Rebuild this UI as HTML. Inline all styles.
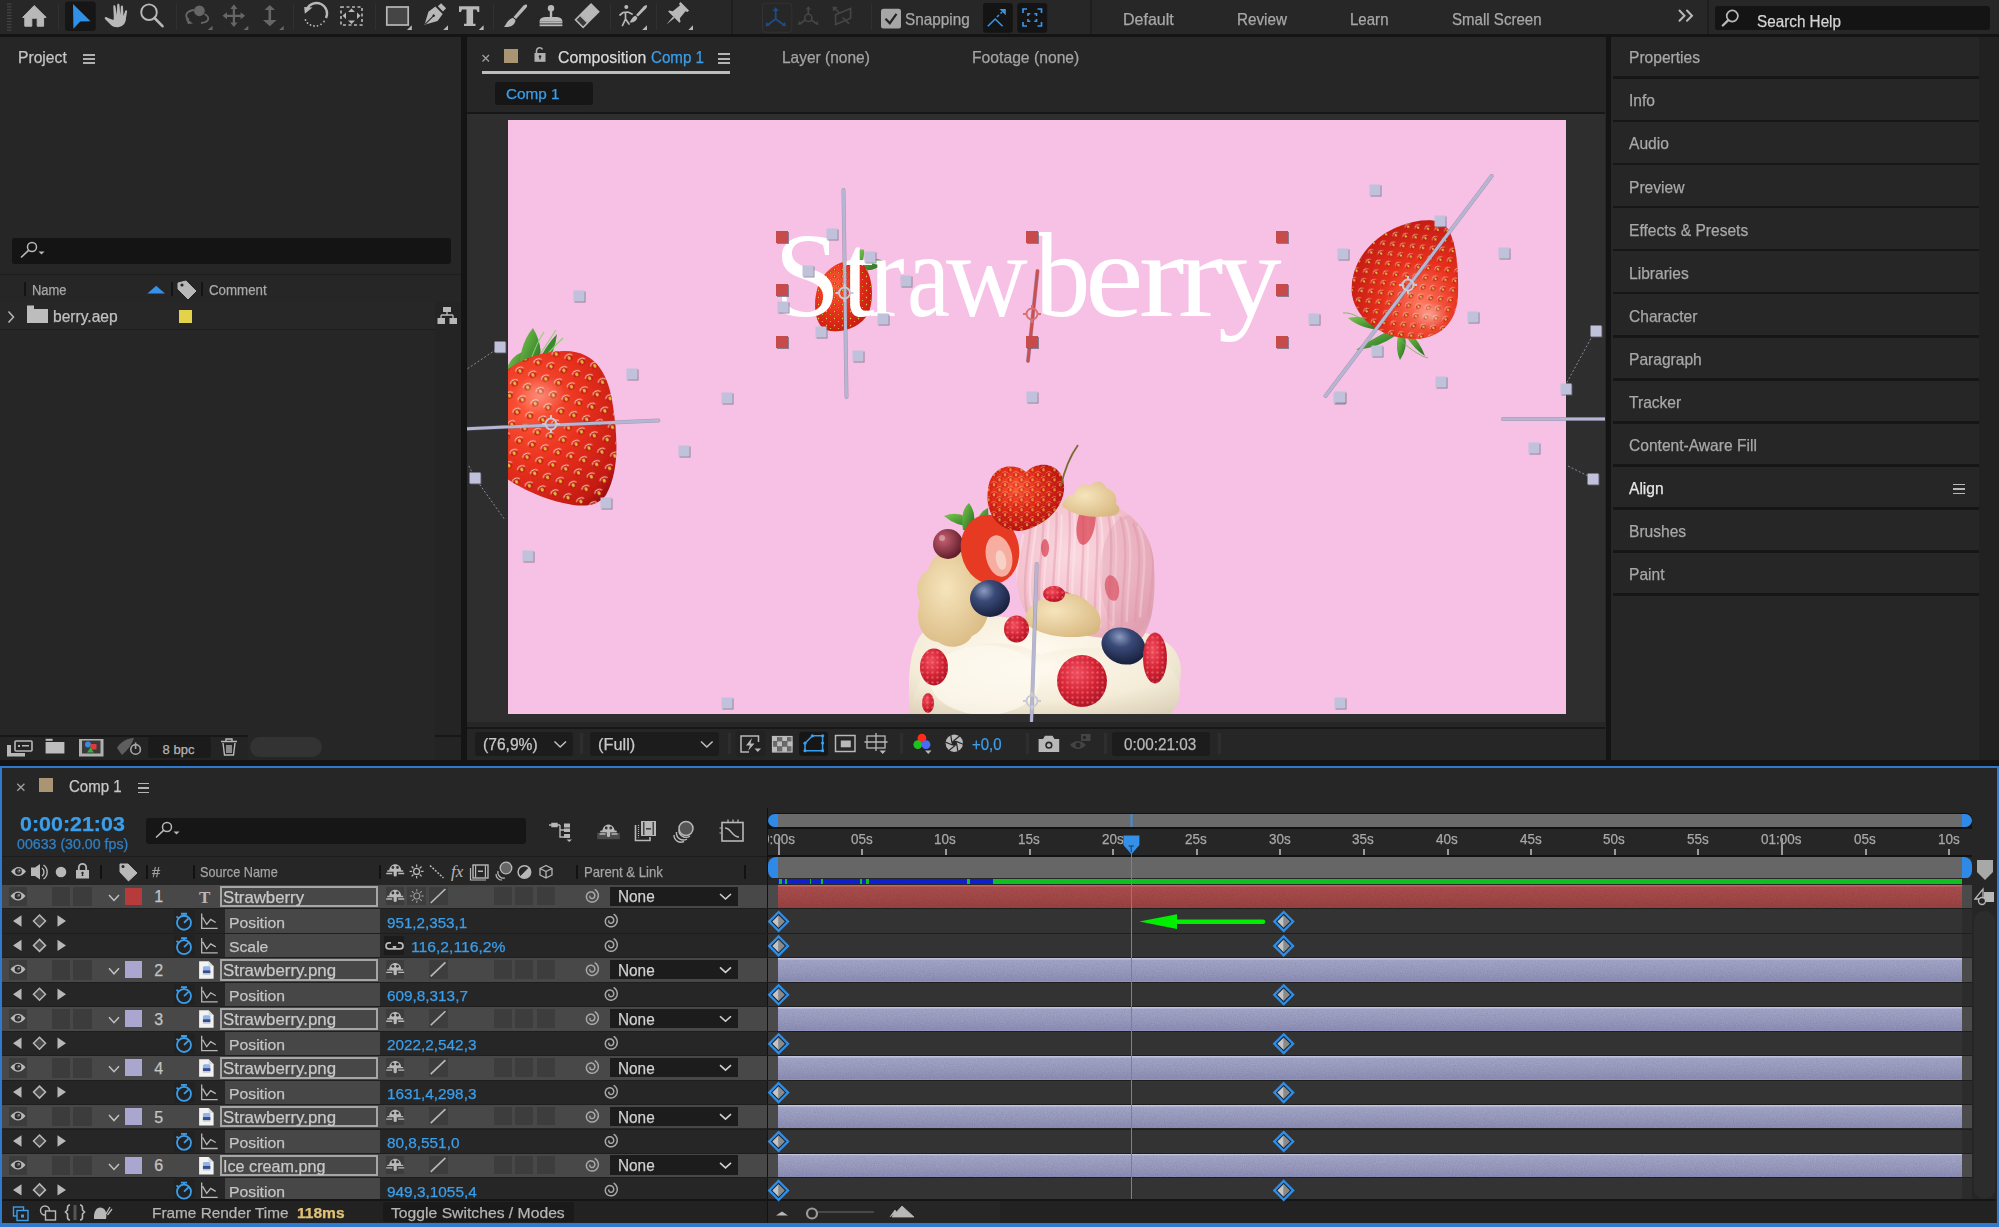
<!DOCTYPE html>
<html><head><meta charset="utf-8">
<style>
*{margin:0;padding:0;box-sizing:border-box}
html,body{width:1999px;height:1227px;overflow:hidden;background:#141414;font-family:"Liberation Sans",sans-serif;color:#b4b4b4;position:relative}
.a{position:absolute}
.t{position:absolute;white-space:nowrap;line-height:1;-webkit-text-stroke:0.25px currentColor}
svg{position:absolute;overflow:visible}
</style></head><body>
<div class="a" style="left:0px;top:0px;width:1999px;height:34px;background:#272727;"></div>
<div class="a" style="left:0px;top:37px;width:461px;height:723px;background:#262626;"></div>
<div class="a" style="left:467px;top:37px;width:1139px;height:723px;background:#262626;"></div>
<div class="a" style="left:467px;top:112px;width:1138px;height:2px;background:#171717;"></div>
<div class="a" style="left:467px;top:114px;width:1138px;height:608px;background:#2e2e2e;"></div>
<div class="a" style="left:508px;top:120px;width:1058px;height:594px;background:#f7c1e6;"></div>
<div class="a" style="left:467px;top:722px;width:1138px;height:5px;background:#262626;"></div>
<div class="a" style="left:467px;top:727px;width:1138px;height:2px;background:#171717;"></div>
<div class="a" style="left:1611px;top:37px;width:388px;height:723px;background:#262626;"></div>
<div class="a" style="left:1979px;top:37px;width:20px;height:723px;background:#212121;"></div>
<div class="a" style="left:0px;top:766px;width:1999px;height:461px;background:#2f7ad1;"></div>
<div class="a" style="left:2px;top:768px;width:1995px;height:455px;background:#262626;"></div>
<div class="t" style="left:1123.20px;top:10.53px;font-size:16.5px;color:#a8a8a8;font-weight:normal;font-family:'Liberation Sans', sans-serif;transform:scaleX(0.9718);transform-origin:0 0;">Default</div>
<div class="t" style="left:1236.70px;top:10.53px;font-size:16.5px;color:#a8a8a8;font-weight:normal;font-family:'Liberation Sans', sans-serif;transform:scaleX(0.9242);transform-origin:0 0;">Review</div>
<div class="t" style="left:1349.70px;top:10.53px;font-size:16.5px;color:#a8a8a8;font-weight:normal;font-family:'Liberation Sans', sans-serif;transform:scaleX(0.9124);transform-origin:0 0;">Learn</div>
<div class="t" style="left:1451.60px;top:10.53px;font-size:16.5px;color:#a8a8a8;font-weight:normal;font-family:'Liberation Sans', sans-serif;transform:scaleX(0.9132);transform-origin:0 0;">Small Screen</div>
<div class="t" style="left:905.00px;top:10.53px;font-size:16.5px;color:#a8a8a8;font-weight:normal;font-family:'Liberation Sans', sans-serif;transform:scaleX(0.9279);transform-origin:0 0;">Snapping</div>
<div class="a" style="left:57.5px;top:4px;width:1px;height:26px;background:#303030;"></div>
<div class="a" style="left:175.5px;top:4px;width:1px;height:26px;background:#303030;"></div>
<div class="a" style="left:292.5px;top:4px;width:1px;height:26px;background:#303030;"></div>
<div class="a" style="left:374.8px;top:4px;width:1px;height:26px;background:#303030;"></div>
<div class="a" style="left:492.5px;top:4px;width:1px;height:26px;background:#303030;"></div>
<div class="a" style="left:609.8px;top:4px;width:1px;height:26px;background:#303030;"></div>
<div class="a" style="left:656px;top:4px;width:1px;height:26px;background:#303030;"></div>
<div class="a" style="left:871px;top:4px;width:1px;height:26px;background:#303030;"></div>
<div class="a" style="left:731px;top:0px;width:2px;height:34px;background:#1f1f1f;"></div>
<div class="a" style="left:1090px;top:0px;width:2px;height:34px;background:#1f1f1f;"></div>
<div class="a" style="left:1707px;top:0px;width:2px;height:34px;background:#1f1f1f;"></div>
<div class="a" style="left:1715px;top:6px;width:275px;height:24px;background:#141414;border-radius:3px"></div>
<div class="t" style="left:1757.20px;top:13.03px;font-size:16.5px;color:#d4d4d4;font-weight:normal;font-family:'Liberation Sans', sans-serif;transform:scaleX(0.9252);transform-origin:0 0;">Search Help</div>
<div class="t" style="left:18.45px;top:49.28px;font-size:16.5px;color:#c4c4c4;font-weight:normal;font-family:'Liberation Sans', sans-serif;transform:scaleX(0.9493);transform-origin:0 0;">Project</div>
<div class="a" style="left:83px;top:53.5px;width:12px;height:2px;background:#b0b0b0;"></div>
<div class="a" style="left:83px;top:57.8px;width:12px;height:2px;background:#b0b0b0;"></div>
<div class="a" style="left:83px;top:62px;width:12px;height:2px;background:#b0b0b0;"></div>
<div class="a" style="left:12px;top:238px;width:439px;height:26px;background:#141414;border-radius:3px"></div>
<div class="a" style="left:0px;top:274px;width:461px;height:28px;background:#262626;border-top:1px solid #1e1e1e"></div>
<div class="a" style="left:24px;top:282px;width:2px;height:14px;background:#141414;"></div>
<div class="a" style="left:171px;top:282px;width:2px;height:14px;background:#141414;"></div>
<div class="a" style="left:201px;top:282px;width:2px;height:14px;background:#141414;"></div>
<div class="t" style="left:32.20px;top:282.95px;font-size:14px;color:#a8a8a8;font-weight:normal;font-family:'Liberation Sans', sans-serif;transform:scaleX(0.9239);transform-origin:0 0;">Name</div>
<div class="t" style="left:208.50px;top:282.95px;font-size:14px;color:#a8a8a8;font-weight:normal;font-family:'Liberation Sans', sans-serif;transform:scaleX(0.9493);transform-origin:0 0;">Comment</div>
<div class="a" style="left:0px;top:302px;width:435px;height:28px;background:#272727;border-bottom:1px solid #1e1e1e"></div>
<div class="a" style="left:435px;top:302px;width:26px;height:433px;background:#242424;"></div>
<div class="t" style="left:52.80px;top:309.26px;font-size:16px;color:#c0c0c0;font-weight:normal;font-family:'Liberation Sans', sans-serif;transform:scaleX(0.9744);transform-origin:0 0;">berry.aep</div>
<div class="a" style="left:179px;top:310px;width:13px;height:13px;background:#e3d24a;"></div>
<div class="a" style="left:0px;top:735px;width:461px;height:25px;background:#242424;border-top:2px solid #171717"></div>
<div class="a" style="left:248px;top:735px;width:187px;height:25px;background:#262626;"></div>
<div class="a" style="left:250px;top:737px;width:72px;height:20px;background:#333333;border-radius:10px"></div>
<div class="a" style="left:148px;top:737px;width:63px;height:21px;background:#1b1b1b;border-radius:3px"></div>
<div class="t" style="left:162.60px;top:742.60px;font-size:13px;color:#b4b4b4;font-weight:normal;font-family:'Liberation Sans', sans-serif;">8 bpc</div>
<div class="t" style="left:557.70px;top:49.33px;font-size:16.5px;color:#dadada;font-weight:normal;font-family:'Liberation Sans', sans-serif;transform:scaleX(0.9629);transform-origin:0 0;">Composition</div>
<div class="t" style="left:651.10px;top:49.33px;font-size:16.5px;color:#3b9eea;font-weight:normal;font-family:'Liberation Sans', sans-serif;transform:scaleX(0.9174);transform-origin:0 0;">Comp 1</div>
<div class="t" style="left:782.10px;top:49.13px;font-size:16.5px;color:#a4a4a4;font-weight:normal;font-family:'Liberation Sans', sans-serif;transform:scaleX(0.9386);transform-origin:0 0;">Layer (none)</div>
<div class="t" style="left:972.20px;top:49.13px;font-size:16.5px;color:#a4a4a4;font-weight:normal;font-family:'Liberation Sans', sans-serif;transform:scaleX(0.9511);transform-origin:0 0;">Footage (none)</div>
<div class="a" style="left:482px;top:71px;width:248px;height:3px;background:#bdbdbd;"></div>
<div class="a" style="left:504px;top:49px;width:14px;height:14px;background:#a99474;"></div>
<div class="a" style="left:718px;top:53px;width:12px;height:2px;background:#b4b4b4;"></div>
<div class="a" style="left:718px;top:57.5px;width:12px;height:2px;background:#b4b4b4;"></div>
<div class="a" style="left:718px;top:62px;width:12px;height:2px;background:#b4b4b4;"></div>
<div class="a" style="left:495px;top:82px;width:98px;height:23px;background:#161616;border-radius:3px"></div>
<div class="t" style="left:506.40px;top:86.10px;font-size:15px;color:#3b9eea;font-weight:normal;font-family:'Liberation Sans', sans-serif;transform:scaleX(1.0206);transform-origin:0 0;">Comp 1</div>
<div class="a" style="left:475px;top:732px;width:98px;height:24px;background:#1c1c1c;border-radius:3px"></div>
<div class="t" style="left:482.80px;top:737.33px;font-size:15.8px;color:#c8c8c8;font-weight:normal;font-family:'Liberation Sans', sans-serif;transform:scaleX(0.9888);transform-origin:0 0;">(76,9%)</div>
<div class="a" style="left:590px;top:732px;width:129px;height:24px;background:#1c1c1c;border-radius:3px"></div>
<div class="t" style="left:597.60px;top:737.33px;font-size:15.8px;color:#c8c8c8;font-weight:normal;font-family:'Liberation Sans', sans-serif;transform:scaleX(1.0339);transform-origin:0 0;">(Full)</div>
<div class="a" style="left:580px;top:733px;width:3px;height:21px;background:#2e2e2e;"></div>
<div class="a" style="left:727.5px;top:733px;width:3px;height:21px;background:#2e2e2e;"></div>
<div class="a" style="left:899.6px;top:733px;width:3px;height:21px;background:#2e2e2e;"></div>
<div class="a" style="left:1026px;top:733px;width:3px;height:21px;background:#2e2e2e;"></div>
<div class="a" style="left:1103.5px;top:733px;width:3px;height:21px;background:#2e2e2e;"></div>
<div class="a" style="left:1218px;top:733px;width:3px;height:21px;background:#2e2e2e;"></div>
<div class="a" style="left:1112px;top:732px;width:98px;height:24px;background:#1c1c1c;border-radius:3px"></div>
<div class="t" style="left:1123.70px;top:737.33px;font-size:15.8px;color:#b8b8b8;font-weight:normal;font-family:'Liberation Sans', sans-serif;transform:scaleX(0.9682);transform-origin:0 0;">0:00:21:03</div>
<div class="t" style="left:972.40px;top:737.13px;font-size:15.8px;color:#3b9eea;font-weight:normal;font-family:'Liberation Sans', sans-serif;transform:scaleX(0.9490);transform-origin:0 0;">+0,0</div>
<div class="t" style="left:1628.70px;top:49.28px;font-size:16.5px;color:#a8a8a8;font-weight:normal;font-family:'Liberation Sans', sans-serif;transform:scaleX(0.9442);transform-origin:0 0;">Properties</div>
<div class="a" style="left:1613px;top:76.45px;width:366px;height:2.6px;background:#161616;"></div>
<div class="t" style="left:1628.70px;top:92.36px;font-size:16.5px;color:#a8a8a8;font-weight:normal;font-family:'Liberation Sans', sans-serif;transform:scaleX(0.9442);transform-origin:0 0;">Info</div>
<div class="a" style="left:1613px;top:119.53px;width:366px;height:2.6px;background:#161616;"></div>
<div class="t" style="left:1628.70px;top:135.44px;font-size:16.5px;color:#a8a8a8;font-weight:normal;font-family:'Liberation Sans', sans-serif;transform:scaleX(0.9442);transform-origin:0 0;">Audio</div>
<div class="a" style="left:1613px;top:162.60999999999999px;width:366px;height:2.6px;background:#161616;"></div>
<div class="t" style="left:1628.70px;top:178.52px;font-size:16.5px;color:#a8a8a8;font-weight:normal;font-family:'Liberation Sans', sans-serif;transform:scaleX(0.9442);transform-origin:0 0;">Preview</div>
<div class="a" style="left:1613px;top:205.69px;width:366px;height:2.6px;background:#161616;"></div>
<div class="t" style="left:1628.70px;top:221.60px;font-size:16.5px;color:#a8a8a8;font-weight:normal;font-family:'Liberation Sans', sans-serif;transform:scaleX(0.9442);transform-origin:0 0;">Effects &amp; Presets</div>
<div class="a" style="left:1613px;top:248.76999999999998px;width:366px;height:2.6px;background:#161616;"></div>
<div class="t" style="left:1628.70px;top:264.68px;font-size:16.5px;color:#a8a8a8;font-weight:normal;font-family:'Liberation Sans', sans-serif;transform:scaleX(0.9442);transform-origin:0 0;">Libraries</div>
<div class="a" style="left:1613px;top:291.84999999999997px;width:366px;height:2.6px;background:#161616;"></div>
<div class="t" style="left:1628.70px;top:307.76px;font-size:16.5px;color:#a8a8a8;font-weight:normal;font-family:'Liberation Sans', sans-serif;transform:scaleX(0.9442);transform-origin:0 0;">Character</div>
<div class="a" style="left:1613px;top:334.93px;width:366px;height:2.6px;background:#161616;"></div>
<div class="t" style="left:1628.70px;top:350.84px;font-size:16.5px;color:#a8a8a8;font-weight:normal;font-family:'Liberation Sans', sans-serif;transform:scaleX(0.9442);transform-origin:0 0;">Paragraph</div>
<div class="a" style="left:1613px;top:378.01px;width:366px;height:2.6px;background:#161616;"></div>
<div class="t" style="left:1628.70px;top:393.92px;font-size:16.5px;color:#a8a8a8;font-weight:normal;font-family:'Liberation Sans', sans-serif;transform:scaleX(0.9442);transform-origin:0 0;">Tracker</div>
<div class="a" style="left:1613px;top:421.09px;width:366px;height:2.6px;background:#161616;"></div>
<div class="t" style="left:1628.70px;top:437.00px;font-size:16.5px;color:#a8a8a8;font-weight:normal;font-family:'Liberation Sans', sans-serif;transform:scaleX(0.9442);transform-origin:0 0;">Content-Aware Fill</div>
<div class="a" style="left:1613px;top:464.16999999999996px;width:366px;height:2.6px;background:#161616;"></div>
<div class="t" style="left:1628.70px;top:480.08px;font-size:16.5px;color:#e6e6e6;font-weight:normal;font-family:'Liberation Sans', sans-serif;transform:scaleX(0.9442);transform-origin:0 0;">Align</div>
<div class="a" style="left:1613px;top:507.24999999999994px;width:366px;height:2.6px;background:#161616;"></div>
<div class="t" style="left:1628.70px;top:523.16px;font-size:16.5px;color:#a8a8a8;font-weight:normal;font-family:'Liberation Sans', sans-serif;transform:scaleX(0.9442);transform-origin:0 0;">Brushes</div>
<div class="a" style="left:1613px;top:550.33px;width:366px;height:2.6px;background:#161616;"></div>
<div class="t" style="left:1628.70px;top:566.24px;font-size:16.5px;color:#a8a8a8;font-weight:normal;font-family:'Liberation Sans', sans-serif;transform:scaleX(0.9442);transform-origin:0 0;">Paint</div>
<div class="a" style="left:1613px;top:593.4100000000001px;width:366px;height:2.6px;background:#161616;"></div>
<div class="a" style="left:1953px;top:483.8px;width:12px;height:1.6px;background:#b8b8b8;"></div>
<div class="a" style="left:1953px;top:488.3px;width:12px;height:1.6px;background:#b8b8b8;"></div>
<div class="a" style="left:1953px;top:492.8px;width:12px;height:1.6px;background:#b8b8b8;"></div>
<svg style="left:0;top:0" width="1999" height="1227" viewBox="0 0 1999 1227">
<defs>
 <radialGradient id="sbg" cx="0.38" cy="0.35" r="0.75">
   <stop offset="0" stop-color="#ff5a3a"/>
   <stop offset="0.45" stop-color="#e22a18"/>
   <stop offset="0.85" stop-color="#b81410"/>
   <stop offset="1" stop-color="#8e0c0c"/>
 </radialGradient>
 <radialGradient id="shl" cx="0.5" cy="0.5" r="0.5">
   <stop offset="0" stop-color="#ffffff" stop-opacity="0.55"/>
   <stop offset="1" stop-color="#ffffff" stop-opacity="0"/>
 </radialGradient>
 <pattern id="seeds" width="11" height="10" patternUnits="userSpaceOnUse">
   <path d="M 1.2,3.2 A 3.2,3 0 0 1 6.8,3.2" stroke="#ffd8d0" stroke-width="0.9" fill="none" opacity="0.7"/>
   <ellipse cx="4" cy="5" rx="3" ry="2.6" fill="#a80c0c" opacity="0.6"/>
   <ellipse cx="4" cy="4.8" rx="1.3" ry="1.7" fill="#e8c448"/>
   <path d="M 6.7,8.2 A 3.2,3 0 0 1 12.3,8.2" stroke="#ffd8d0" stroke-width="0.9" fill="none" opacity="0.7"/>
   <ellipse cx="9.5" cy="10" rx="3" ry="2.6" fill="#a80c0c" opacity="0.6"/>
   <ellipse cx="9.5" cy="9.8" rx="1.3" ry="1.7" fill="#e8c448"/>
   <ellipse cx="-1.5" cy="10" rx="3" ry="2.6" fill="#a80c0c" opacity="0.6"/>
   <ellipse cx="-1.5" cy="9.8" rx="1.3" ry="1.7" fill="#e8c448"/>
   <ellipse cx="9.5" cy="0" rx="3" ry="2.6" fill="#a80c0c" opacity="0.6"/>
   <ellipse cx="9.5" cy="-0.2" rx="1.3" ry="1.7" fill="#e8c448"/>
 </pattern>
 <radialGradient id="sbg2" cx="0.35" cy="0.35" r="0.8">
   <stop offset="0" stop-color="#ff5a3c"/><stop offset="0.5" stop-color="#e8301c"/><stop offset="0.9" stop-color="#c41a12"/><stop offset="1" stop-color="#a01010"/>
 </radialGradient>
 <radialGradient id="sbg3" cx="0.65" cy="0.7" r="0.8">
   <stop offset="0" stop-color="#ff7a60"/><stop offset="0.45" stop-color="#e8301c"/><stop offset="0.9" stop-color="#c41a12"/><stop offset="1" stop-color="#a01010"/>
 </radialGradient>
 <pattern id="seedsBig" width="20" height="18" patternUnits="userSpaceOnUse" patternTransform="rotate(-25)">
   <g id="sd"><path d="M 0.5,5.8 A 4.2,3.6 0 0 1 8.5,5.8" stroke="#ffe0d8" stroke-width="1.3" fill="none" opacity="0.75"/><ellipse cx="4.5" cy="7" rx="3.4" ry="2.9" fill="#b81410" opacity="0.7"/><ellipse cx="4.5" cy="7" rx="1.5" ry="2" fill="#dcc040"/></g>
   <use href="#sd" x="10" y="9"/><use href="#sd" x="-10" y="9"/><use href="#sd" x="10" y="-9"/><use href="#sd" x="-10" y="-9"/>
 </pattern>
 <pattern id="seedsMd" width="15" height="13" patternUnits="userSpaceOnUse" patternTransform="rotate(-35)">
   <g id="sd2"><path d="M 0.5,4.3 A 3.2,2.7 0 0 1 6.5,4.3" stroke="#ffe0d8" stroke-width="1" fill="none" opacity="0.75"/><ellipse cx="3.5" cy="5.2" rx="2.6" ry="2.2" fill="#b81410" opacity="0.7"/><ellipse cx="3.5" cy="5.2" rx="1.1" ry="1.5" fill="#dcc040"/></g>
   <use href="#sd2" x="7.5" y="6.5"/><use href="#sd2" x="-7.5" y="6.5"/><use href="#sd2" x="7.5" y="-6.5"/><use href="#sd2" x="-7.5" y="-6.5"/>
 </pattern>
 <pattern id="seedsSm" width="8" height="7" patternUnits="userSpaceOnUse">
   <g id="sd3"><ellipse cx="2.5" cy="3.5" rx="1.8" ry="1.5" fill="#b81410" opacity="0.7"/><ellipse cx="2.5" cy="3.5" rx="0.8" ry="1.1" fill="#dcc040"/></g>
   <use href="#sd3" x="4" y="3.5"/><use href="#sd3" x="-4" y="3.5"/>
 </pattern>
 <pattern id="rdots" width="5" height="5" patternUnits="userSpaceOnUse">
   <circle cx="2.5" cy="2.5" r="1.2" fill="#ff8090"/>
 </pattern>
 <pattern id="seeds2" width="8" height="8" patternUnits="userSpaceOnUse">
   <ellipse cx="2.5" cy="2.5" rx="1" ry="1.2" fill="#e6c040"/>
   <ellipse cx="6.5" cy="6.5" rx="1" ry="1.2" fill="#e6c040"/>
 </pattern>
 <linearGradient id="leaf" x1="0" y1="0" x2="1" y2="1">
   <stop offset="0" stop-color="#7cc850"/><stop offset="1" stop-color="#1f6a1c"/>
 </linearGradient>
 <radialGradient id="blue" cx="0.35" cy="0.3" r="0.7">
   <stop offset="0" stop-color="#8a9ac0"/><stop offset="0.4" stop-color="#3a4a78"/><stop offset="1" stop-color="#1a2240"/>
 </radialGradient>
 <radialGradient id="rasp" cx="0.4" cy="0.35" r="0.7">
   <stop offset="0" stop-color="#f05060"/><stop offset="0.55" stop-color="#d42434"/><stop offset="1" stop-color="#a81424"/>
 </radialGradient>
 <radialGradient id="pinkscoop" cx="0.4" cy="0.4" r="0.7">
   <stop offset="0" stop-color="#fbd8e0"/><stop offset="0.65" stop-color="#f2c0cc"/><stop offset="1" stop-color="#e4a6b6"/>
 </radialGradient>
 <radialGradient id="cream" cx="0.45" cy="0.35" r="0.8">
   <stop offset="0" stop-color="#fffaf0"/><stop offset="0.6" stop-color="#f4ecd8"/><stop offset="1" stop-color="#dcd0b8"/>
 </radialGradient>
 <radialGradient id="crumb" cx="0.4" cy="0.4" r="0.7">
   <stop offset="0" stop-color="#f6e4bc"/><stop offset="1" stop-color="#d8b880"/>
 </radialGradient>
 <radialGradient id="grape" cx="0.35" cy="0.35" r="0.7">
   <stop offset="0" stop-color="#c86070"/><stop offset="1" stop-color="#5a1a28"/>
 </radialGradient>
 <clipPath id="scoopclip"><path d="M 1016,567 C 1014,530 1040,501 1080,499 C 1125,499 1154,530 1154,567 C 1156,600 1152,625 1142,638 C 1100,642 1050,632 1025,612 C 1018,597 1016,582 1016,567 Z"/></clipPath>
 <clipPath id="compclip"><rect x="508" y="120" width="1058" height="594"/></clipPath>
 <clipPath id="viewclip"><rect x="467" y="114" width="1138" height="608"/></clipPath>
 <filter id="hs" x="-20%" y="-20%" width="150%" height="150%"><feDropShadow dx="1" dy="1" stdDeviation="0.4" flood-color="#606070" flood-opacity="0.7"/></filter>
</defs><g clip-path="url(#compclip)"><path d="M 508,392 Q 500,362 522,352 Q 528,375 516,392 Z" fill="url(#leaf)"/><path d="M 520,374 Q 518,346 533,328 Q 546,350 537,372 Z" fill="url(#leaf)"/><path d="M 536,366 Q 546,345 557,334 Q 555,352 545,366 Z" fill="#3a8a30"/><path d="M 534,364 Q 548,342 556,330 M 538,366 Q 552,348 563,338 M 530,362 Q 537,342 544,332" stroke="#8ad070" stroke-width="1.1" fill="none"/><path d="M 485,400 C 495,370 530,351 565,351 C 597,351 609,376 613,406 C 618,440 619,472 606,495 C 598,506 584,508 563,503 C 533,496 503,480 485,460 Z" fill="url(#sbg2)"/><path d="M 485,400 C 495,370 530,351 565,351 C 597,351 609,376 613,406 C 618,440 619,472 606,495 C 598,506 584,508 563,503 C 533,496 503,480 485,460 Z" fill="url(#seedsBig)"/><ellipse cx="540" cy="395" rx="26" ry="20" fill="url(#shl)" opacity="0.6"/><path d="M 853,262 Q 858,246 864,250 Q 865,258 860,266 Z M 860,266 Q 878,255 884,262 Q 875,272 864,270 Z" fill="url(#leaf)"/><path d="M 860,262 C 872,270 875,295 869,312 C 861,328 841,334 826,330 C 815,325 813,305 817,290 C 821,272 840,256 860,262 Z" fill="url(#sbg2)"/><path d="M 860,262 C 872,270 875,295 869,312 C 861,328 841,334 826,330 C 815,325 813,305 817,290 C 821,272 840,256 860,262 Z" fill="url(#seedsSm)"/><path d="M 1385,322 Q 1360,315 1348,318 Q 1362,330 1385,330 Z" fill="url(#leaf)"/><path d="M 1390,330 Q 1370,340 1356,350 Q 1378,348 1395,336 Z" fill="url(#leaf)"/><path d="M 1398,335 Q 1395,350 1400,360 Q 1408,348 1405,336 Z" fill="url(#leaf)"/><path d="M 1405,335 Q 1415,350 1425,356 Q 1420,342 1410,333 Z" fill="url(#leaf)"/><path d="M 1360,318 Q 1350,312 1343,313 M 1400,340 Q 1418,356 1428,358" stroke="#6ab050" stroke-width="0.8" fill="none"/><path d="M 1440,222 C 1455,228 1459,262 1458,295 C 1457,322 1441,338 1415,339 C 1385,339 1357,322 1352,295 C 1349,265 1369,238 1400,226 C 1415,220 1430,219 1440,222 Z" fill="url(#sbg3)"/><path d="M 1440,222 C 1455,228 1459,262 1458,295 C 1457,322 1441,338 1415,339 C 1385,339 1357,322 1352,295 C 1349,265 1369,238 1400,226 C 1415,220 1430,219 1440,222 Z" fill="url(#seedsMd)"/><ellipse cx="1430" cy="315" rx="18" ry="14" fill="url(#shl)" opacity="0.7"/><path d="M 909,714 L 909,682 C 910,655 915,640 925,630 C 950,615 990,612 1020,620 C 1060,628 1100,630 1140,632 C 1165,636 1181,650 1181,670 C 1181,690 1172,705 1168,714 Z" fill="url(#cream)"/><path d="M 1016,567 C 1014,530 1040,501 1080,499 C 1125,499 1154,530 1154,567 C 1156,600 1152,625 1142,638 C 1100,642 1050,632 1025,612 C 1018,597 1016,582 1016,567 Z" fill="url(#pinkscoop)"/><g clip-path="url(#scoopclip)"><path d="M 1018.2,531.1 C 1014.3,556.4 1005.3,586.0 1015.6,615.5" stroke="#e096a8" stroke-width="2.4" fill="none" opacity="0.45"/><path d="M 1023.2,534.1 C 1019.3,556.4 1010.3,586.0 1020.6,611.5" stroke="#fde8ee" stroke-width="2.4" fill="none" opacity="0.5"/><path d="M 1030.9,522.8 C 1028.8,552.4 1019.8,586.9 1028.9,621.4" stroke="#e096a8" stroke-width="2.4" fill="none" opacity="0.45"/><path d="M 1035.9,525.8 C 1033.8,552.4 1024.8,586.9 1033.9,617.4" stroke="#fde8ee" stroke-width="2.4" fill="none" opacity="0.5"/><path d="M 1043.7,516.3 C 1043.4,549.2 1034.4,587.6 1042.2,626.0" stroke="#e096a8" stroke-width="2.4" fill="none" opacity="0.45"/><path d="M 1048.7,519.3 C 1048.4,549.2 1039.4,587.6 1047.2,622.0" stroke="#fde8ee" stroke-width="2.4" fill="none" opacity="0.5"/><path d="M 1056.5,511.7 C 1057.9,547.0 1048.9,588.2 1055.5,629.4" stroke="#e096a8" stroke-width="2.4" fill="none" opacity="0.45"/><path d="M 1061.5,514.7 C 1062.9,547.0 1053.9,588.2 1060.5,625.4" stroke="#fde8ee" stroke-width="2.4" fill="none" opacity="0.5"/><path d="M 1069.2,508.9 C 1072.5,545.6 1063.5,588.5 1068.7,631.3" stroke="#e096a8" stroke-width="2.4" fill="none" opacity="0.45"/><path d="M 1074.2,511.9 C 1077.5,545.6 1068.5,588.5 1073.7,627.3" stroke="#fde8ee" stroke-width="2.4" fill="none" opacity="0.5"/><path d="M 1082.0,508.0 C 1087.0,545.2 1078.0,588.6 1082.0,632.0" stroke="#e096a8" stroke-width="2.4" fill="none" opacity="0.45"/><path d="M 1087.0,511.0 C 1092.0,545.2 1083.0,588.6 1087.0,628.0" stroke="#fde8ee" stroke-width="2.4" fill="none" opacity="0.5"/><path d="M 1094.8,508.9 C 1101.5,545.6 1092.5,588.5 1095.3,631.3" stroke="#e096a8" stroke-width="2.4" fill="none" opacity="0.45"/><path d="M 1099.8,511.9 C 1106.5,545.6 1097.5,588.5 1100.3,627.3" stroke="#fde8ee" stroke-width="2.4" fill="none" opacity="0.5"/><path d="M 1107.5,511.7 C 1116.1,547.0 1107.1,588.2 1108.5,629.4" stroke="#e096a8" stroke-width="2.4" fill="none" opacity="0.45"/><path d="M 1112.5,514.7 C 1121.1,547.0 1112.1,588.2 1113.5,625.4" stroke="#fde8ee" stroke-width="2.4" fill="none" opacity="0.5"/><path d="M 1120.3,516.3 C 1130.6,549.2 1121.6,587.6 1121.8,626.0" stroke="#e096a8" stroke-width="2.4" fill="none" opacity="0.45"/><path d="M 1125.3,519.3 C 1135.6,549.2 1126.6,587.6 1126.8,622.0" stroke="#fde8ee" stroke-width="2.4" fill="none" opacity="0.5"/><path d="M 1133.1,522.8 C 1145.2,552.4 1136.2,586.9 1135.1,621.4" stroke="#e096a8" stroke-width="2.4" fill="none" opacity="0.45"/><path d="M 1138.1,525.8 C 1150.2,552.4 1141.2,586.9 1140.1,617.4" stroke="#fde8ee" stroke-width="2.4" fill="none" opacity="0.5"/><path d="M 1145.8,531.1 C 1159.7,556.4 1150.7,586.0 1148.4,615.5" stroke="#e096a8" stroke-width="2.4" fill="none" opacity="0.45"/><path d="M 1150.8,534.1 C 1164.7,556.4 1155.7,586.0 1153.4,611.5" stroke="#fde8ee" stroke-width="2.4" fill="none" opacity="0.5"/><ellipse cx="1086" cy="524" rx="9" ry="21" fill="#d83c4c" opacity="0.7" transform="rotate(10 1086 524)"/><ellipse cx="1112" cy="588" rx="7" ry="13" fill="#d83c4c" opacity="0.7" transform="rotate(-10 1112 588)"/><ellipse cx="1062" cy="600" rx="12" ry="9" fill="#d83c4c" opacity="0.7" transform="rotate(0 1062 600)"/><ellipse cx="1045" cy="548" rx="4" ry="9" fill="#d83c4c" opacity="0.7" transform="rotate(0 1045 548)"/><ellipse cx="1130" cy="575" rx="30" ry="60" fill="#d890a4" opacity="0.25"/></g><path d="M 1062,506 C 1064,498 1070,494 1074,495 C 1076,487 1084,482 1090,486 C 1094,480 1104,480 1106,488 C 1114,490 1118,498 1116,504 C 1122,508 1120,515 1112,516 C 1095,518 1075,517 1062,506 Z" fill="url(#crumb)"/><path d="M 920,602 C 914,590 918,575 928,570 C 930,558 942,550 954,552 C 966,546 982,552 984,566 C 992,574 990,590 986,598 C 992,612 986,630 972,636 C 966,648 948,650 938,642 C 922,640 914,622 920,602 Z" fill="url(#crumb)"/><path d="M 1024,622 C 1026,606 1040,596 1052,600 C 1062,590 1080,592 1090,604 C 1102,612 1104,626 1096,634 C 1075,640 1040,638 1024,622 Z" fill="url(#crumb)"/><path d="M 912,714 C 912,690 922,668 950,652 C 985,640 1020,640 1040,655 C 1060,648 1100,645 1130,650 C 1160,655 1180,670 1180,690 C 1180,702 1174,710 1170,714 Z" fill="url(#cream)"/><ellipse cx="985" cy="680" rx="55" ry="35" fill="#fdf9ef" opacity="0.7"/><path d="M 944,516 Q 962,508 978,527 Q 958,528 944,516 Z" fill="url(#leaf)"/><path d="M 963,530 Q 960,510 969,503 Q 978,515 972,530 Z" fill="url(#leaf)"/><path d="M 975,528 Q 978,512 988,508 Q 990,520 982,530 Z" fill="url(#leaf)"/><ellipse cx="948" cy="544" rx="15" ry="15" fill="url(#grape)"/><circle cx="942" cy="538" r="3" fill="#fff" opacity="0.35"/><ellipse cx="990" cy="549.5" rx="29" ry="35" fill="#e63a22" transform="rotate(-12 990 549.5)"/><ellipse cx="999" cy="556" rx="13" ry="21" fill="#f7aea0" transform="rotate(-12 999 556)"/><ellipse cx="1001" cy="560" rx="5" ry="10" fill="#f7d0c6" transform="rotate(-12 1001 560)"/><path d="M 1026,472 C 1040,458 1066,464 1064,490 C 1062,512 1040,528 1020,531 C 995,531 985,510 988,490 C 990,466 1012,461 1026,472 Z" fill="url(#sbg)"/><path d="M 1026,472 C 1040,458 1066,464 1064,490 C 1062,512 1040,528 1020,531 C 995,531 985,510 988,490 C 990,466 1012,461 1026,472 Z" fill="url(#seeds)" opacity="0.6"/><path d="M 1061,486 Q 1066,462 1078,445" stroke="#7a6a30" stroke-width="1.8" fill="none"/><ellipse cx="990" cy="598.5" rx="20" ry="18.5" fill="url(#blue)"/><ellipse cx="1123.5" cy="646" rx="22.5" ry="18" fill="url(#blue)" transform="rotate(20 1123.5 646)"/><ellipse cx="934" cy="667" rx="14" ry="18.5" fill="url(#rasp)"/><ellipse cx="934" cy="667" rx="14" ry="18.5" fill="url(#rdots)" opacity="0.5"/><ellipse cx="928" cy="703" rx="6" ry="10" fill="url(#rasp)"/><ellipse cx="928" cy="703" rx="6" ry="10" fill="url(#rdots)" opacity="0.5"/><ellipse cx="1082" cy="681" rx="25" ry="26" fill="url(#rasp)"/><ellipse cx="1082" cy="681" rx="25" ry="26" fill="url(#rdots)" opacity="0.5"/><ellipse cx="1155" cy="658" rx="12" ry="25.5" fill="url(#rasp)"/><ellipse cx="1155" cy="658" rx="12" ry="25.5" fill="url(#rdots)" opacity="0.5"/><ellipse cx="1016.5" cy="629" rx="12.5" ry="13.5" fill="url(#rasp)"/><ellipse cx="1016.5" cy="629" rx="12.5" ry="13.5" fill="url(#rdots)" opacity="0.5"/><ellipse cx="1054" cy="594" rx="11" ry="8" fill="url(#rasp)"/><ellipse cx="1054" cy="594" rx="11" ry="8" fill="url(#rdots)" opacity="0.5"/></g></svg>
<div class="t" style="left:773.69px;top:214.66px;font-size:121px;color:#fff;font-family:'Liberation Serif',serif;-webkit-text-stroke:0;transform:scaleX(0.9882);transform-origin:0 0">S</div>
<div class="t" style="left:841.53px;top:214.66px;font-size:121px;color:#fff;font-family:'Liberation Serif',serif;-webkit-text-stroke:0;transform:scaleX(0.9677);transform-origin:0 0">t</div>
<div class="t" style="left:868.83px;top:214.66px;font-size:121px;color:#fff;font-family:'Liberation Serif',serif;-webkit-text-stroke:0;transform:scaleX(0.8861);transform-origin:0 0">r</div>
<div class="t" style="left:906.80px;top:214.66px;font-size:121px;color:#fff;font-family:'Liberation Serif',serif;-webkit-text-stroke:0;transform:scaleX(0.8000);transform-origin:0 0">a</div>
<div class="t" style="left:945.60px;top:214.66px;font-size:121px;color:#fff;font-family:'Liberation Serif',serif;-webkit-text-stroke:0;transform:scaleX(0.9349);transform-origin:0 0">w</div>
<div class="t" style="left:1034.50px;top:214.66px;font-size:121px;color:#fff;font-family:'Liberation Serif',serif;-webkit-text-stroke:0;transform:scaleX(0.9145);transform-origin:0 0">b</div>
<div class="t" style="left:1084.55px;top:214.66px;font-size:121px;color:#fff;font-family:'Liberation Serif',serif;-webkit-text-stroke:0;transform:scaleX(1.0909);transform-origin:0 0">e</div>
<div class="t" style="left:1138.74px;top:214.66px;font-size:121px;color:#fff;font-family:'Liberation Serif',serif;-webkit-text-stroke:0;transform:scaleX(1.1278);transform-origin:0 0">r</div>
<div class="t" style="left:1177.74px;top:214.66px;font-size:121px;color:#fff;font-family:'Liberation Serif',serif;-webkit-text-stroke:0;transform:scaleX(1.1278);transform-origin:0 0">r</div>
<div class="t" style="left:1217.95px;top:214.66px;font-size:121px;color:#fff;font-family:'Liberation Serif',serif;-webkit-text-stroke:0;transform:scaleX(1.0517);transform-origin:0 0">y</div>
<svg style="left:0;top:0" width="1999" height="1227" viewBox="0 0 1999 1227"><g clip-path="url(#viewclip)"><line x1="843.5" y1="190" x2="846.5" y2="397" stroke="#6a6a80" stroke-width="4" stroke-linecap="round" opacity="0.5"/><line x1="843.5" y1="190" x2="846.5" y2="397" stroke="#b4b6d4" stroke-width="3" stroke-linecap="round"/><line x1="1325.5" y1="396" x2="1491.7" y2="176" stroke="#6a6a80" stroke-width="4" stroke-linecap="round" opacity="0.5"/><line x1="1325.5" y1="396" x2="1491.7" y2="176" stroke="#b4b6d4" stroke-width="3" stroke-linecap="round"/><line x1="467.6" y1="428.7" x2="658.4" y2="420.4" stroke="#6a6a80" stroke-width="4" stroke-linecap="round" opacity="0.5"/><line x1="467.6" y1="428.7" x2="658.4" y2="420.4" stroke="#b4b6d4" stroke-width="3" stroke-linecap="round"/><line x1="1503" y1="419" x2="1610" y2="419" stroke="#6a6a80" stroke-width="4" stroke-linecap="round" opacity="0.5"/><line x1="1503" y1="419" x2="1610" y2="419" stroke="#b4b6d4" stroke-width="3" stroke-linecap="round"/><line x1="1036.7" y1="564" x2="1031.5" y2="721" stroke="#6a6a80" stroke-width="4" stroke-linecap="round" opacity="0.5"/><line x1="1036.7" y1="564" x2="1031.5" y2="721" stroke="#b4b6d4" stroke-width="3" stroke-linecap="round"/><line x1="1037.5" y1="271" x2="1028" y2="361" stroke="#6a6a80" stroke-width="4" stroke-linecap="round" opacity="0.5"/><line x1="1037.5" y1="271" x2="1028" y2="361" stroke="#c85050" stroke-width="3" stroke-linecap="round"/><line x1="467.6" y1="368.6" x2="497" y2="349" stroke="#8a8a9a" stroke-width="1" stroke-dasharray="2 2"/><line x1="468.8" y1="465.9" x2="475" y2="478" stroke="#8a8a9a" stroke-width="1" stroke-dasharray="2 2"/><line x1="475" y1="478" x2="505" y2="520" stroke="#8a8a9a" stroke-width="1" stroke-dasharray="2 2"/><line x1="1565" y1="386" x2="1595" y2="331" stroke="#8a8a9a" stroke-width="1" stroke-dasharray="2 2"/><line x1="1568" y1="466" x2="1592" y2="478" stroke="#8a8a9a" stroke-width="1" stroke-dasharray="2 2"/><circle cx="844.5" cy="293" r="5.5" fill="none" stroke="#c8cad8" stroke-width="2"/><path d="M 835.5,293 H 839.5 M 849.5,293 H 853.5 M 844.5,284 V 288 M 844.5,298 V 302" stroke="#c8cad8" stroke-width="2"/><circle cx="1408" cy="285" r="5.5" fill="none" stroke="#c8cad8" stroke-width="2"/><path d="M 1399,285 H 1403 M 1413,285 H 1417 M 1408,276 V 280 M 1408,290 V 294" stroke="#c8cad8" stroke-width="2"/><circle cx="551" cy="424" r="5.5" fill="none" stroke="#c8cad8" stroke-width="2"/><path d="M 542,424 H 546 M 556,424 H 560 M 551,415 V 419 M 551,429 V 433" stroke="#c8cad8" stroke-width="2"/><circle cx="1032" cy="701" r="5.5" fill="none" stroke="#c8cad8" stroke-width="2"/><path d="M 1023,701 H 1027 M 1037,701 H 1041 M 1032,692 V 696 M 1032,706 V 710" stroke="#c8cad8" stroke-width="2"/><circle cx="1032" cy="314" r="5.5" fill="none" stroke="#d87070" stroke-width="2"/><path d="M 1023,314 H 1027 M 1037,314 H 1041 M 1032,305 V 309 M 1032,319 V 323" stroke="#d87070" stroke-width="2"/><rect x="826.5" y="228.5" width="11" height="11" fill="#c0c2dc" filter="url(#hs)"/><rect x="864.5" y="251.5" width="11" height="11" fill="#c0c2dc" filter="url(#hs)"/><rect x="802.5" y="265.5" width="11" height="11" fill="#c0c2dc" filter="url(#hs)"/><rect x="900.5" y="275.5" width="11" height="11" fill="#c0c2dc" filter="url(#hs)"/><rect x="777.5" y="301.5" width="11" height="11" fill="#c0c2dc" filter="url(#hs)"/><rect x="877.5" y="313.5" width="11" height="11" fill="#c0c2dc" filter="url(#hs)"/><rect x="815.5" y="326.5" width="11" height="11" fill="#c0c2dc" filter="url(#hs)"/><rect x="852.5" y="350.5" width="11" height="11" fill="#c0c2dc" filter="url(#hs)"/><rect x="573.5" y="290.5" width="11" height="11" fill="#c0c2dc" filter="url(#hs)"/><rect x="494.5" y="341.5" width="11" height="11" fill="#c0c2dc" filter="url(#hs)"/><rect x="626.5" y="368.5" width="11" height="11" fill="#c0c2dc" filter="url(#hs)"/><rect x="721.5" y="392.5" width="11" height="11" fill="#c0c2dc" filter="url(#hs)"/><rect x="678.5" y="445.5" width="11" height="11" fill="#c0c2dc" filter="url(#hs)"/><rect x="469.5" y="472.5" width="11" height="11" fill="#c0c2dc" filter="url(#hs)"/><rect x="600.5" y="497.5" width="11" height="11" fill="#c0c2dc" filter="url(#hs)"/><rect x="522.5" y="550.5" width="11" height="11" fill="#c0c2dc" filter="url(#hs)"/><rect x="1369.5" y="184.5" width="11" height="11" fill="#c0c2dc" filter="url(#hs)"/><rect x="1434.5" y="215.5" width="11" height="11" fill="#c0c2dc" filter="url(#hs)"/><rect x="1337.5" y="248.5" width="11" height="11" fill="#c0c2dc" filter="url(#hs)"/><rect x="1498.5" y="247.5" width="11" height="11" fill="#c0c2dc" filter="url(#hs)"/><rect x="1308.5" y="313.5" width="11" height="11" fill="#c0c2dc" filter="url(#hs)"/><rect x="1467.5" y="311.5" width="11" height="11" fill="#c0c2dc" filter="url(#hs)"/><rect x="1371.5" y="345.5" width="11" height="11" fill="#c0c2dc" filter="url(#hs)"/><rect x="1435.5" y="376.5" width="11" height="11" fill="#c0c2dc" filter="url(#hs)"/><rect x="1333.5" y="392.5" width="11" height="11" fill="#c0c2dc" filter="url(#hs)"/><rect x="1590.5" y="325.5" width="11" height="11" fill="#c0c2dc" filter="url(#hs)"/><rect x="1560.5" y="383.5" width="11" height="11" fill="#c0c2dc" filter="url(#hs)"/><rect x="1528.5" y="442.5" width="11" height="11" fill="#c0c2dc" filter="url(#hs)"/><rect x="1587.5" y="473.5" width="11" height="11" fill="#c0c2dc" filter="url(#hs)"/><rect x="1026.5" y="391.5" width="11" height="11" fill="#c0c2dc" filter="url(#hs)"/><rect x="1334.5" y="391.5" width="11" height="11" fill="#c0c2dc" filter="url(#hs)"/><rect x="721.5" y="697.5" width="11" height="11" fill="#c0c2dc" filter="url(#hs)"/><rect x="1334.5" y="697.5" width="11" height="11" fill="#c0c2dc" filter="url(#hs)"/><rect x="776" y="231" width="12" height="12" fill="#c84c4c" filter="url(#hs)"/><rect x="1026" y="231" width="12" height="12" fill="#c84c4c" filter="url(#hs)"/><rect x="1276" y="231" width="12" height="12" fill="#c84c4c" filter="url(#hs)"/><rect x="776" y="284" width="12" height="12" fill="#c84c4c" filter="url(#hs)"/><rect x="1276" y="284" width="12" height="12" fill="#c84c4c" filter="url(#hs)"/><rect x="776" y="336" width="12" height="12" fill="#c84c4c" filter="url(#hs)"/><rect x="1026" y="336" width="12" height="12" fill="#c84c4c" filter="url(#hs)"/><rect x="1276" y="336" width="12" height="12" fill="#c84c4c" filter="url(#hs)"/></g></svg>
<div class="t" style="left:68.50px;top:779.06px;font-size:16px;color:#c8c8c8;font-weight:normal;font-family:'Liberation Sans', sans-serif;transform:scaleX(0.9390);transform-origin:0 0;">Comp 1</div>
<div class="a" style="left:39px;top:778px;width:14px;height:14px;background:#a99474;"></div>
<div class="a" style="left:138px;top:782.5px;width:11px;height:1.6px;background:#b4b4b4;"></div>
<div class="a" style="left:138px;top:787px;width:11px;height:1.6px;background:#b4b4b4;"></div>
<div class="a" style="left:138px;top:791.5px;width:11px;height:1.6px;background:#b4b4b4;"></div>
<div class="t" style="left:19.60px;top:813.97px;font-size:20px;color:#3b9eea;font-weight:bold;font-family:'Liberation Sans', sans-serif;transform:scaleX(1.0712);transform-origin:0 0;">0:00:21:03</div>
<div class="t" style="left:16.80px;top:837.45px;font-size:14px;color:#2f80c4;font-weight:normal;font-family:'Liberation Sans', sans-serif;transform:scaleX(1.0134);transform-origin:0 0;">00633 (30.00 fps)</div>
<div class="a" style="left:146px;top:818px;width:380px;height:26px;background:#161616;border-radius:3px"></div>
<div class="a" style="left:2px;top:856px;width:765px;height:1px;background:#1c1c1c;"></div>
<div class="t" style="left:152.10px;top:864.65px;font-size:14px;color:#a0a0a0;font-weight:normal;font-family:'Liberation Sans', sans-serif;transform:scaleX(1.0404);transform-origin:0 0;">#</div>
<div class="t" style="left:199.50px;top:865.23px;font-size:14.5px;color:#a4a4a4;font-weight:normal;font-family:'Liberation Sans', sans-serif;transform:scaleX(0.8765);transform-origin:0 0;">Source Name</div>
<div class="t" style="left:583.60px;top:865.23px;font-size:14.5px;color:#a4a4a4;font-weight:normal;font-family:'Liberation Sans', sans-serif;transform:scaleX(0.9064);transform-origin:0 0;">Parent &amp; Link</div>
<div class="a" style="left:100px;top:865px;width:2px;height:14px;background:#121212;"></div>
<div class="a" style="left:145.5px;top:865px;width:2px;height:14px;background:#121212;"></div>
<div class="a" style="left:192.5px;top:865px;width:2px;height:14px;background:#121212;"></div>
<div class="a" style="left:379px;top:865px;width:2px;height:14px;background:#121212;"></div>
<div class="a" style="left:576px;top:865px;width:2px;height:14px;background:#121212;"></div>
<div class="a" style="left:743.5px;top:865px;width:2px;height:14px;background:#121212;"></div>
<div class="a" style="left:767px;top:808px;width:1px;height:391px;background:#121212;"></div>
<div class="a" style="left:768px;top:813px;width:1205px;height:15px;background:#121212;border-radius:8px 8px 0 0"></div>
<div class="a" style="left:778px;top:814px;width:1184px;height:13px;background:#6b6b6b;"></div>
<div class="a" style="left:768px;top:814px;width:10px;height:13px;background:#2e8ae6;border-radius:7px 0 0 7px"></div>
<div class="a" style="left:1962px;top:814px;width:10px;height:13px;background:#2e8ae6;border-radius:0 7px 7px 0"></div>
<div class="a" style="left:768px;top:827px;width:1204px;height:2px;background:#121212;"></div>
<div class="a" style="left:768px;top:829px;width:1204px;height:26px;background:#262626;"></div>
<div class="a" style="left:768px;top:855px;width:1204px;height:2px;background:#121212;"></div>
<div class="a" style="left:778px;top:857px;width:1184px;height:22px;background:#666666;"></div>
<div class="a" style="left:768px;top:857px;width:10px;height:22px;background:#2e8ae6;border-radius:8px 0 0 8px"></div>
<div class="a" style="left:1962px;top:857px;width:10px;height:22px;background:#2e8ae6;border-radius:0 8px 8px 0"></div>
<div class="a" style="left:768px;top:878px;width:1204px;height:7px;background:#262626;"></div>
<div class="a" style="left:778px;top:879px;width:215px;height:5px;background:#0f1fcc;"></div>
<div class="a" style="left:993px;top:879px;width:969px;height:5px;background:#10c020;"></div>
<div class="a" style="left:779px;top:879px;width:3px;height:5px;background:#10c020;"></div>
<div class="a" style="left:785px;top:879px;width:1.6px;height:5px;background:#10c020;"></div>
<div class="a" style="left:809.5px;top:879px;width:1.6px;height:5px;background:#10c020;"></div>
<div class="a" style="left:821px;top:879px;width:1.6px;height:5px;background:#10c020;"></div>
<div class="a" style="left:860px;top:879px;width:1.6px;height:5px;background:#10c020;"></div>
<div class="a" style="left:865.5px;top:879px;width:3px;height:5px;background:#10c020;"></div>
<div class="a" style="left:967px;top:879px;width:3px;height:5px;background:#10c020;"></div>
<div class="t" style="left:761.51px;top:831.73px;font-size:14.5px;color:#a8a8a8;font-weight:normal;font-family:'Liberation Sans', sans-serif;transform:scaleX(0.9300);transform-origin:0 0;">0:00s</div>
<div class="a" style="left:777.8px;top:838px;width:2px;height:17px;background:#9a9a9a;"></div>
<div class="t" style="left:850.73px;top:831.73px;font-size:14.5px;color:#a8a8a8;font-weight:normal;font-family:'Liberation Sans', sans-serif;transform:scaleX(0.9300);transform-origin:0 0;">05s</div>
<div class="a" style="left:861.4px;top:848.5px;width:2px;height:6px;background:#9a9a9a;"></div>
<div class="t" style="left:934.33px;top:831.73px;font-size:14.5px;color:#a8a8a8;font-weight:normal;font-family:'Liberation Sans', sans-serif;transform:scaleX(0.9300);transform-origin:0 0;">10s</div>
<div class="a" style="left:945.0px;top:848.5px;width:2px;height:6px;background:#9a9a9a;"></div>
<div class="t" style="left:1017.93px;top:831.73px;font-size:14.5px;color:#a8a8a8;font-weight:normal;font-family:'Liberation Sans', sans-serif;transform:scaleX(0.9300);transform-origin:0 0;">15s</div>
<div class="a" style="left:1028.6px;top:848.5px;width:2px;height:6px;background:#9a9a9a;"></div>
<div class="t" style="left:1101.53px;top:831.73px;font-size:14.5px;color:#a8a8a8;font-weight:normal;font-family:'Liberation Sans', sans-serif;transform:scaleX(0.9300);transform-origin:0 0;">20s</div>
<div class="a" style="left:1112.1999999999998px;top:848.5px;width:2px;height:6px;background:#9a9a9a;"></div>
<div class="t" style="left:1185.13px;top:831.73px;font-size:14.5px;color:#a8a8a8;font-weight:normal;font-family:'Liberation Sans', sans-serif;transform:scaleX(0.9300);transform-origin:0 0;">25s</div>
<div class="a" style="left:1195.8px;top:848.5px;width:2px;height:6px;background:#9a9a9a;"></div>
<div class="t" style="left:1268.73px;top:831.73px;font-size:14.5px;color:#a8a8a8;font-weight:normal;font-family:'Liberation Sans', sans-serif;transform:scaleX(0.9300);transform-origin:0 0;">30s</div>
<div class="a" style="left:1279.3999999999999px;top:848.5px;width:2px;height:6px;background:#9a9a9a;"></div>
<div class="t" style="left:1352.33px;top:831.73px;font-size:14.5px;color:#a8a8a8;font-weight:normal;font-family:'Liberation Sans', sans-serif;transform:scaleX(0.9300);transform-origin:0 0;">35s</div>
<div class="a" style="left:1363.0px;top:848.5px;width:2px;height:6px;background:#9a9a9a;"></div>
<div class="t" style="left:1435.93px;top:831.73px;font-size:14.5px;color:#a8a8a8;font-weight:normal;font-family:'Liberation Sans', sans-serif;transform:scaleX(0.9300);transform-origin:0 0;">40s</div>
<div class="a" style="left:1446.6px;top:848.5px;width:2px;height:6px;background:#9a9a9a;"></div>
<div class="t" style="left:1519.53px;top:831.73px;font-size:14.5px;color:#a8a8a8;font-weight:normal;font-family:'Liberation Sans', sans-serif;transform:scaleX(0.9300);transform-origin:0 0;">45s</div>
<div class="a" style="left:1530.1999999999998px;top:848.5px;width:2px;height:6px;background:#9a9a9a;"></div>
<div class="t" style="left:1603.13px;top:831.73px;font-size:14.5px;color:#a8a8a8;font-weight:normal;font-family:'Liberation Sans', sans-serif;transform:scaleX(0.9300);transform-origin:0 0;">50s</div>
<div class="a" style="left:1613.8px;top:848.5px;width:2px;height:6px;background:#9a9a9a;"></div>
<div class="t" style="left:1686.73px;top:831.73px;font-size:14.5px;color:#a8a8a8;font-weight:normal;font-family:'Liberation Sans', sans-serif;transform:scaleX(0.9300);transform-origin:0 0;">55s</div>
<div class="a" style="left:1697.3999999999999px;top:848.5px;width:2px;height:6px;background:#9a9a9a;"></div>
<div class="t" style="left:1760.96px;top:831.73px;font-size:14.5px;color:#a8a8a8;font-weight:normal;font-family:'Liberation Sans', sans-serif;transform:scaleX(0.9300);transform-origin:0 0;">01:00s</div>
<div class="a" style="left:1781.0px;top:838px;width:2px;height:17px;background:#9a9a9a;"></div>
<div class="t" style="left:1853.93px;top:831.73px;font-size:14.5px;color:#a8a8a8;font-weight:normal;font-family:'Liberation Sans', sans-serif;transform:scaleX(0.9300);transform-origin:0 0;">05s</div>
<div class="a" style="left:1864.6px;top:848.5px;width:2px;height:6px;background:#9a9a9a;"></div>
<div class="t" style="left:1937.53px;top:831.73px;font-size:14.5px;color:#a8a8a8;font-weight:normal;font-family:'Liberation Sans', sans-serif;transform:scaleX(0.9300);transform-origin:0 0;">10s</div>
<div class="a" style="left:1948.1999999999998px;top:848.5px;width:2px;height:6px;background:#9a9a9a;"></div>
<div class="a" style="left:740px;top:829px;width:27px;height:26px;background:#262626;"></div>
<div class="a" style="left:767px;top:829px;width:1px;height:26px;background:#121212;"></div>
<div class="a" style="left:2px;top:885.0px;width:765px;height:23.45px;background:#484848;"></div>
<div class="a" style="left:9px;top:887.0px;width:18px;height:19.45px;background:#3c3c3c;"></div>
<div class="a" style="left:52px;top:887.0px;width:18px;height:19.45px;background:#3c3c3c;"></div>
<div class="a" style="left:73px;top:887.0px;width:19px;height:19.45px;background:#3c3c3c;"></div>
<div class="a" style="left:125px;top:888.0px;width:17px;height:17px;background:#b83b3b;"></div>
<div class="t" style="left:154.20px;top:889.46px;font-size:16px;color:#c4c4c4;font-weight:normal;font-family:'Liberation Sans', sans-serif;">1</div>
<div class="a" style="left:220px;top:886.0px;width:158px;height:21.45px;background:#474747;border:2px solid #a6a6a6"></div>
<div class="t" style="left:223.20px;top:889.03px;font-size:16.5px;color:#c8c8c8;font-weight:normal;font-family:'Liberation Sans', sans-serif;transform:scaleX(1.0155);transform-origin:0 0;">Strawberry</div>
<div class="a" style="left:386px;top:887.0px;width:18px;height:18.45px;background:#3d3d3d;"></div>
<div class="a" style="left:407px;top:887.0px;width:19px;height:18.45px;background:#3d3d3d;"></div>
<div class="a" style="left:429px;top:887.0px;width:19px;height:18.45px;background:#3d3d3d;"></div>
<div class="a" style="left:494px;top:887.0px;width:18px;height:18.45px;background:#3d3d3d;"></div>
<div class="a" style="left:515px;top:887.0px;width:18px;height:18.45px;background:#3d3d3d;"></div>
<div class="a" style="left:537px;top:887.0px;width:18px;height:18.45px;background:#3d3d3d;"></div>
<div class="a" style="left:609.5px;top:886.5px;width:128.5px;height:19.45px;background:#1c1c1c;"></div>
<div class="t" style="left:618.20px;top:889.46px;font-size:16px;color:#d0d0d0;font-weight:normal;font-family:'Liberation Sans', sans-serif;transform:scaleX(0.9595);transform-origin:0 0;">None</div>
<div class="a" style="left:768px;top:885.0px;width:10px;height:23.45px;background:#4a4a4a;"></div>
<div class="a" style="left:1962px;top:885.0px;width:10px;height:23.45px;background:#4a4a4a;"></div>
<div class="a" style="left:778px;top:885.0px;width:1184px;height:23.45px;background:linear-gradient(#c46e6e 0,#b05050 2px,#a84a4a 60%,#9e4444 100%);"></div>
<div class="a" style="left:2px;top:908.45px;width:1970px;height:1px;background:#1e1e1e;"></div>
<div class="a" style="left:2px;top:909.45px;width:765px;height:23.45px;background:#262626;"></div>
<div class="a" style="left:174px;top:910.45px;width:21px;height:21.45px;background:#222222;"></div>
<div class="a" style="left:225px;top:909.45px;width:155px;height:23.45px;background:#474747;"></div>
<div class="t" style="left:229.20px;top:914.83px;font-size:15.5px;color:#c4c4c4;font-weight:normal;font-family:'Liberation Sans', sans-serif;transform:scaleX(1.0156);transform-origin:0 0;">Position</div>
<div class="t" style="left:386.70px;top:914.75px;font-size:15px;color:#3b9eea;font-weight:normal;font-family:'Liberation Sans', sans-serif;transform:scaleX(1.0122);transform-origin:0 0;">951,2,353,1</div>
<div class="a" style="left:768px;top:909.45px;width:1194px;height:23.45px;background:#333333;"></div>
<div class="a" style="left:1962px;top:909.45px;width:10px;height:23.45px;background:#2c2c2c;"></div>
<div class="a" style="left:2px;top:932.9000000000001px;width:1970px;height:1px;background:#1e1e1e;"></div>
<div class="a" style="left:2px;top:933.9px;width:765px;height:23.45px;background:#262626;"></div>
<div class="a" style="left:174px;top:934.9px;width:21px;height:21.45px;background:#222222;"></div>
<div class="a" style="left:225px;top:933.9px;width:155px;height:23.45px;background:#474747;"></div>
<div class="t" style="left:229.20px;top:939.28px;font-size:15.5px;color:#c4c4c4;font-weight:normal;font-family:'Liberation Sans', sans-serif;transform:scaleX(1.0156);transform-origin:0 0;">Scale</div>
<div class="t" style="left:411.20px;top:939.20px;font-size:15px;color:#3b9eea;font-weight:normal;font-family:'Liberation Sans', sans-serif;transform:scaleX(1.0460);transform-origin:0 0;">116,2,116,2%</div>
<div class="a" style="left:384px;top:935.9px;width:20px;height:19.45px;background:#1c1c1c;"></div>
<div class="a" style="left:768px;top:933.9px;width:1194px;height:23.45px;background:#333333;"></div>
<div class="a" style="left:1962px;top:933.9px;width:10px;height:23.45px;background:#2c2c2c;"></div>
<div class="a" style="left:2px;top:957.35px;width:1970px;height:1px;background:#1e1e1e;"></div>
<div class="a" style="left:2px;top:958.35px;width:765px;height:23.45px;background:#484848;"></div>
<div class="a" style="left:9px;top:960.35px;width:18px;height:19.45px;background:#3c3c3c;"></div>
<div class="a" style="left:52px;top:960.35px;width:18px;height:19.45px;background:#3c3c3c;"></div>
<div class="a" style="left:73px;top:960.35px;width:19px;height:19.45px;background:#3c3c3c;"></div>
<div class="a" style="left:125px;top:961.35px;width:17px;height:17px;background:#a9a7d0;"></div>
<div class="t" style="left:154.20px;top:962.81px;font-size:16px;color:#c4c4c4;font-weight:normal;font-family:'Liberation Sans', sans-serif;">2</div>
<div class="a" style="left:220px;top:959.35px;width:158px;height:21.45px;background:#474747;border:2px solid #a6a6a6"></div>
<div class="t" style="left:223.20px;top:962.38px;font-size:16.5px;color:#c8c8c8;font-weight:normal;font-family:'Liberation Sans', sans-serif;transform:scaleX(1.0212);transform-origin:0 0;">Strawberry.png</div>
<div class="a" style="left:386px;top:960.35px;width:18px;height:18.45px;background:#3d3d3d;"></div>
<div class="a" style="left:429px;top:960.35px;width:19px;height:18.45px;background:#3d3d3d;"></div>
<div class="a" style="left:494px;top:960.35px;width:18px;height:18.45px;background:#3d3d3d;"></div>
<div class="a" style="left:515px;top:960.35px;width:18px;height:18.45px;background:#3d3d3d;"></div>
<div class="a" style="left:537px;top:960.35px;width:18px;height:18.45px;background:#3d3d3d;"></div>
<div class="a" style="left:609.5px;top:959.85px;width:128.5px;height:19.45px;background:#1c1c1c;"></div>
<div class="t" style="left:618.20px;top:962.81px;font-size:16px;color:#d0d0d0;font-weight:normal;font-family:'Liberation Sans', sans-serif;transform:scaleX(0.9595);transform-origin:0 0;">None</div>
<div class="a" style="left:768px;top:958.35px;width:10px;height:23.45px;background:#4a4a4a;"></div>
<div class="a" style="left:1962px;top:958.35px;width:10px;height:23.45px;background:#4a4a4a;"></div>
<div class="a" style="left:778px;top:958.35px;width:1184px;height:23.45px;background:linear-gradient(#c8cae0 0,#aaacd0 2px,#9fa1c6 55%,#9092bc 100%);"></div>
<div class="a" style="left:2px;top:981.8000000000001px;width:1970px;height:1px;background:#1e1e1e;"></div>
<div class="a" style="left:2px;top:982.8px;width:765px;height:23.45px;background:#262626;"></div>
<div class="a" style="left:174px;top:983.8px;width:21px;height:21.45px;background:#222222;"></div>
<div class="a" style="left:225px;top:982.8px;width:155px;height:23.45px;background:#474747;"></div>
<div class="t" style="left:229.20px;top:988.18px;font-size:15.5px;color:#c4c4c4;font-weight:normal;font-family:'Liberation Sans', sans-serif;transform:scaleX(1.0156);transform-origin:0 0;">Position</div>
<div class="t" style="left:386.70px;top:988.10px;font-size:15px;color:#3b9eea;font-weight:normal;font-family:'Liberation Sans', sans-serif;transform:scaleX(1.0210);transform-origin:0 0;">609,8,313,7</div>
<div class="a" style="left:768px;top:982.8px;width:1194px;height:23.45px;background:#333333;"></div>
<div class="a" style="left:1962px;top:982.8px;width:10px;height:23.45px;background:#2c2c2c;"></div>
<div class="a" style="left:2px;top:1006.25px;width:1970px;height:1px;background:#1e1e1e;"></div>
<div class="a" style="left:2px;top:1007.25px;width:765px;height:23.45px;background:#484848;"></div>
<div class="a" style="left:9px;top:1009.25px;width:18px;height:19.45px;background:#3c3c3c;"></div>
<div class="a" style="left:52px;top:1009.25px;width:18px;height:19.45px;background:#3c3c3c;"></div>
<div class="a" style="left:73px;top:1009.25px;width:19px;height:19.45px;background:#3c3c3c;"></div>
<div class="a" style="left:125px;top:1010.25px;width:17px;height:17px;background:#a9a7d0;"></div>
<div class="t" style="left:154.20px;top:1011.71px;font-size:16px;color:#c4c4c4;font-weight:normal;font-family:'Liberation Sans', sans-serif;">3</div>
<div class="a" style="left:220px;top:1008.25px;width:158px;height:21.45px;background:#474747;border:2px solid #a6a6a6"></div>
<div class="t" style="left:223.20px;top:1011.28px;font-size:16.5px;color:#c8c8c8;font-weight:normal;font-family:'Liberation Sans', sans-serif;transform:scaleX(1.0212);transform-origin:0 0;">Strawberry.png</div>
<div class="a" style="left:386px;top:1009.25px;width:18px;height:18.45px;background:#3d3d3d;"></div>
<div class="a" style="left:429px;top:1009.25px;width:19px;height:18.45px;background:#3d3d3d;"></div>
<div class="a" style="left:494px;top:1009.25px;width:18px;height:18.45px;background:#3d3d3d;"></div>
<div class="a" style="left:515px;top:1009.25px;width:18px;height:18.45px;background:#3d3d3d;"></div>
<div class="a" style="left:537px;top:1009.25px;width:18px;height:18.45px;background:#3d3d3d;"></div>
<div class="a" style="left:609.5px;top:1008.75px;width:128.5px;height:19.45px;background:#1c1c1c;"></div>
<div class="t" style="left:618.20px;top:1011.71px;font-size:16px;color:#d0d0d0;font-weight:normal;font-family:'Liberation Sans', sans-serif;transform:scaleX(0.9595);transform-origin:0 0;">None</div>
<div class="a" style="left:768px;top:1007.25px;width:10px;height:23.45px;background:#4a4a4a;"></div>
<div class="a" style="left:1962px;top:1007.25px;width:10px;height:23.45px;background:#4a4a4a;"></div>
<div class="a" style="left:778px;top:1007.25px;width:1184px;height:23.45px;background:linear-gradient(#c8cae0 0,#aaacd0 2px,#9fa1c6 55%,#9092bc 100%);"></div>
<div class="a" style="left:2px;top:1030.7px;width:1970px;height:1px;background:#1e1e1e;"></div>
<div class="a" style="left:2px;top:1031.7px;width:765px;height:23.45px;background:#262626;"></div>
<div class="a" style="left:174px;top:1032.7px;width:21px;height:21.45px;background:#222222;"></div>
<div class="a" style="left:225px;top:1031.7px;width:155px;height:23.45px;background:#474747;"></div>
<div class="t" style="left:229.20px;top:1037.08px;font-size:15.5px;color:#c4c4c4;font-weight:normal;font-family:'Liberation Sans', sans-serif;transform:scaleX(1.0156);transform-origin:0 0;">Position</div>
<div class="t" style="left:386.70px;top:1037.00px;font-size:15px;color:#3b9eea;font-weight:normal;font-family:'Liberation Sans', sans-serif;transform:scaleX(1.0208);transform-origin:0 0;">2022,2,542,3</div>
<div class="a" style="left:768px;top:1031.7px;width:1194px;height:23.45px;background:#333333;"></div>
<div class="a" style="left:1962px;top:1031.7px;width:10px;height:23.45px;background:#2c2c2c;"></div>
<div class="a" style="left:2px;top:1055.15px;width:1970px;height:1px;background:#1e1e1e;"></div>
<div class="a" style="left:2px;top:1056.15px;width:765px;height:23.45px;background:#484848;"></div>
<div class="a" style="left:9px;top:1058.15px;width:18px;height:19.45px;background:#3c3c3c;"></div>
<div class="a" style="left:52px;top:1058.15px;width:18px;height:19.45px;background:#3c3c3c;"></div>
<div class="a" style="left:73px;top:1058.15px;width:19px;height:19.45px;background:#3c3c3c;"></div>
<div class="a" style="left:125px;top:1059.15px;width:17px;height:17px;background:#a9a7d0;"></div>
<div class="t" style="left:154.20px;top:1060.61px;font-size:16px;color:#c4c4c4;font-weight:normal;font-family:'Liberation Sans', sans-serif;">4</div>
<div class="a" style="left:220px;top:1057.15px;width:158px;height:21.45px;background:#474747;border:2px solid #a6a6a6"></div>
<div class="t" style="left:223.20px;top:1060.18px;font-size:16.5px;color:#c8c8c8;font-weight:normal;font-family:'Liberation Sans', sans-serif;transform:scaleX(1.0212);transform-origin:0 0;">Strawberry.png</div>
<div class="a" style="left:386px;top:1058.15px;width:18px;height:18.45px;background:#3d3d3d;"></div>
<div class="a" style="left:429px;top:1058.15px;width:19px;height:18.45px;background:#3d3d3d;"></div>
<div class="a" style="left:494px;top:1058.15px;width:18px;height:18.45px;background:#3d3d3d;"></div>
<div class="a" style="left:515px;top:1058.15px;width:18px;height:18.45px;background:#3d3d3d;"></div>
<div class="a" style="left:537px;top:1058.15px;width:18px;height:18.45px;background:#3d3d3d;"></div>
<div class="a" style="left:609.5px;top:1057.65px;width:128.5px;height:19.45px;background:#1c1c1c;"></div>
<div class="t" style="left:618.20px;top:1060.61px;font-size:16px;color:#d0d0d0;font-weight:normal;font-family:'Liberation Sans', sans-serif;transform:scaleX(0.9595);transform-origin:0 0;">None</div>
<div class="a" style="left:768px;top:1056.15px;width:10px;height:23.45px;background:#4a4a4a;"></div>
<div class="a" style="left:1962px;top:1056.15px;width:10px;height:23.45px;background:#4a4a4a;"></div>
<div class="a" style="left:778px;top:1056.15px;width:1184px;height:23.45px;background:linear-gradient(#c8cae0 0,#aaacd0 2px,#9fa1c6 55%,#9092bc 100%);"></div>
<div class="a" style="left:2px;top:1079.6000000000001px;width:1970px;height:1px;background:#1e1e1e;"></div>
<div class="a" style="left:2px;top:1080.6px;width:765px;height:23.45px;background:#262626;"></div>
<div class="a" style="left:174px;top:1081.6px;width:21px;height:21.45px;background:#222222;"></div>
<div class="a" style="left:225px;top:1080.6px;width:155px;height:23.45px;background:#474747;"></div>
<div class="t" style="left:229.20px;top:1085.98px;font-size:15.5px;color:#c4c4c4;font-weight:normal;font-family:'Liberation Sans', sans-serif;transform:scaleX(1.0156);transform-origin:0 0;">Position</div>
<div class="t" style="left:386.70px;top:1085.90px;font-size:15px;color:#3b9eea;font-weight:normal;font-family:'Liberation Sans', sans-serif;transform:scaleX(1.0208);transform-origin:0 0;">1631,4,298,3</div>
<div class="a" style="left:768px;top:1080.6px;width:1194px;height:23.45px;background:#333333;"></div>
<div class="a" style="left:1962px;top:1080.6px;width:10px;height:23.45px;background:#2c2c2c;"></div>
<div class="a" style="left:2px;top:1104.05px;width:1970px;height:1px;background:#1e1e1e;"></div>
<div class="a" style="left:2px;top:1105.05px;width:765px;height:23.45px;background:#484848;"></div>
<div class="a" style="left:9px;top:1107.05px;width:18px;height:19.45px;background:#3c3c3c;"></div>
<div class="a" style="left:52px;top:1107.05px;width:18px;height:19.45px;background:#3c3c3c;"></div>
<div class="a" style="left:73px;top:1107.05px;width:19px;height:19.45px;background:#3c3c3c;"></div>
<div class="a" style="left:125px;top:1108.05px;width:17px;height:17px;background:#a9a7d0;"></div>
<div class="t" style="left:154.20px;top:1109.51px;font-size:16px;color:#c4c4c4;font-weight:normal;font-family:'Liberation Sans', sans-serif;">5</div>
<div class="a" style="left:220px;top:1106.05px;width:158px;height:21.45px;background:#474747;border:2px solid #a6a6a6"></div>
<div class="t" style="left:223.20px;top:1109.08px;font-size:16.5px;color:#c8c8c8;font-weight:normal;font-family:'Liberation Sans', sans-serif;transform:scaleX(1.0212);transform-origin:0 0;">Strawberry.png</div>
<div class="a" style="left:386px;top:1107.05px;width:18px;height:18.45px;background:#3d3d3d;"></div>
<div class="a" style="left:429px;top:1107.05px;width:19px;height:18.45px;background:#3d3d3d;"></div>
<div class="a" style="left:494px;top:1107.05px;width:18px;height:18.45px;background:#3d3d3d;"></div>
<div class="a" style="left:515px;top:1107.05px;width:18px;height:18.45px;background:#3d3d3d;"></div>
<div class="a" style="left:537px;top:1107.05px;width:18px;height:18.45px;background:#3d3d3d;"></div>
<div class="a" style="left:609.5px;top:1106.55px;width:128.5px;height:19.45px;background:#1c1c1c;"></div>
<div class="t" style="left:618.20px;top:1109.51px;font-size:16px;color:#d0d0d0;font-weight:normal;font-family:'Liberation Sans', sans-serif;transform:scaleX(0.9595);transform-origin:0 0;">None</div>
<div class="a" style="left:768px;top:1105.05px;width:10px;height:23.45px;background:#4a4a4a;"></div>
<div class="a" style="left:1962px;top:1105.05px;width:10px;height:23.45px;background:#4a4a4a;"></div>
<div class="a" style="left:778px;top:1105.05px;width:1184px;height:23.45px;background:linear-gradient(#c8cae0 0,#aaacd0 2px,#9fa1c6 55%,#9092bc 100%);"></div>
<div class="a" style="left:2px;top:1128.5px;width:1970px;height:1px;background:#1e1e1e;"></div>
<div class="a" style="left:2px;top:1129.5px;width:765px;height:23.45px;background:#262626;"></div>
<div class="a" style="left:174px;top:1130.5px;width:21px;height:21.45px;background:#222222;"></div>
<div class="a" style="left:225px;top:1129.5px;width:155px;height:23.45px;background:#474747;"></div>
<div class="t" style="left:229.20px;top:1134.88px;font-size:15.5px;color:#c4c4c4;font-weight:normal;font-family:'Liberation Sans', sans-serif;transform:scaleX(1.0156);transform-origin:0 0;">Position</div>
<div class="t" style="left:386.70px;top:1134.80px;font-size:15px;color:#3b9eea;font-weight:normal;font-family:'Liberation Sans', sans-serif;transform:scaleX(1.0213);transform-origin:0 0;">80,8,551,0</div>
<div class="a" style="left:768px;top:1129.5px;width:1194px;height:23.45px;background:#333333;"></div>
<div class="a" style="left:1962px;top:1129.5px;width:10px;height:23.45px;background:#2c2c2c;"></div>
<div class="a" style="left:2px;top:1152.95px;width:1970px;height:1px;background:#1e1e1e;"></div>
<div class="a" style="left:2px;top:1153.95px;width:765px;height:23.45px;background:#484848;"></div>
<div class="a" style="left:9px;top:1155.95px;width:18px;height:19.45px;background:#3c3c3c;"></div>
<div class="a" style="left:52px;top:1155.95px;width:18px;height:19.45px;background:#3c3c3c;"></div>
<div class="a" style="left:73px;top:1155.95px;width:19px;height:19.45px;background:#3c3c3c;"></div>
<div class="a" style="left:125px;top:1156.95px;width:17px;height:17px;background:#a9a7d0;"></div>
<div class="t" style="left:154.20px;top:1158.41px;font-size:16px;color:#c4c4c4;font-weight:normal;font-family:'Liberation Sans', sans-serif;">6</div>
<div class="a" style="left:220px;top:1154.95px;width:158px;height:21.45px;background:#474747;border:2px solid #a6a6a6"></div>
<div class="t" style="left:223.20px;top:1157.98px;font-size:16.5px;color:#c8c8c8;font-weight:normal;font-family:'Liberation Sans', sans-serif;transform:scaleX(0.9795);transform-origin:0 0;">Ice cream.png</div>
<div class="a" style="left:386px;top:1155.95px;width:18px;height:18.45px;background:#3d3d3d;"></div>
<div class="a" style="left:429px;top:1155.95px;width:19px;height:18.45px;background:#3d3d3d;"></div>
<div class="a" style="left:494px;top:1155.95px;width:18px;height:18.45px;background:#3d3d3d;"></div>
<div class="a" style="left:515px;top:1155.95px;width:18px;height:18.45px;background:#3d3d3d;"></div>
<div class="a" style="left:537px;top:1155.95px;width:18px;height:18.45px;background:#3d3d3d;"></div>
<div class="a" style="left:609.5px;top:1155.45px;width:128.5px;height:19.45px;background:#1c1c1c;"></div>
<div class="t" style="left:618.20px;top:1158.41px;font-size:16px;color:#d0d0d0;font-weight:normal;font-family:'Liberation Sans', sans-serif;transform:scaleX(0.9595);transform-origin:0 0;">None</div>
<div class="a" style="left:768px;top:1153.95px;width:10px;height:23.45px;background:#4a4a4a;"></div>
<div class="a" style="left:1962px;top:1153.95px;width:10px;height:23.45px;background:#4a4a4a;"></div>
<div class="a" style="left:778px;top:1153.95px;width:1184px;height:23.45px;background:linear-gradient(#c8cae0 0,#aaacd0 2px,#9fa1c6 55%,#9092bc 100%);"></div>
<div class="a" style="left:2px;top:1177.4px;width:1970px;height:1px;background:#1e1e1e;"></div>
<div class="a" style="left:2px;top:1178.4px;width:765px;height:23.45px;background:#262626;"></div>
<div class="a" style="left:174px;top:1179.4px;width:21px;height:21.45px;background:#222222;"></div>
<div class="a" style="left:225px;top:1178.4px;width:155px;height:23.45px;background:#474747;"></div>
<div class="t" style="left:229.20px;top:1183.78px;font-size:15.5px;color:#c4c4c4;font-weight:normal;font-family:'Liberation Sans', sans-serif;transform:scaleX(1.0156);transform-origin:0 0;">Position</div>
<div class="t" style="left:386.70px;top:1183.70px;font-size:15px;color:#3b9eea;font-weight:normal;font-family:'Liberation Sans', sans-serif;transform:scaleX(1.0254);transform-origin:0 0;">949,3,1055,4</div>
<div class="a" style="left:768px;top:1178.4px;width:1194px;height:23.45px;background:#333333;"></div>
<div class="a" style="left:1962px;top:1178.4px;width:10px;height:23.45px;background:#2c2c2c;"></div>
<div class="a" style="left:2px;top:1201.8500000000001px;width:1970px;height:1px;background:#1e1e1e;"></div>
<svg style="left:0;top:0" width="1999" height="1227" viewBox="0 0 1999 1227"><defs><filter id="grain" x="0" y="0" width="100%" height="100%"><feTurbulence type="fractalNoise" baseFrequency="0.9" numOctaves="2" seed="4"/><feColorMatrix type="matrix" values="0 0 0 0 0  0 0 0 0 0  0 0 0 0 0  0 0 0 -1.2 1.1"/></filter></defs><rect x="778" y="887.0" width="1184" height="20.45" filter="url(#grain)" opacity="0.12"/><rect x="778" y="960.35" width="1184" height="20.45" filter="url(#grain)" opacity="0.12"/><rect x="778" y="1009.25" width="1184" height="20.45" filter="url(#grain)" opacity="0.12"/><rect x="778" y="1058.15" width="1184" height="20.45" filter="url(#grain)" opacity="0.12"/><rect x="778" y="1107.05" width="1184" height="20.45" filter="url(#grain)" opacity="0.12"/><rect x="778" y="1155.95" width="1184" height="20.45" filter="url(#grain)" opacity="0.12"/></svg>
<div class="a" style="left:1130.5px;top:836px;width:1.6px;height:363px;background:#3d8fe0;"></div>
<div class="a" style="left:2px;top:1199px;width:1994px;height:2px;background:#151515;"></div>
<div class="a" style="left:2px;top:1201px;width:1994px;height:22px;background:#222222;"></div>
<div class="t" style="left:151.60px;top:1205.30px;font-size:15px;color:#b4b4b4;font-weight:normal;font-family:'Liberation Sans', sans-serif;transform:scaleX(1.0243);transform-origin:0 0;">Frame Render Time</div>
<div class="t" style="left:297.20px;top:1205.30px;font-size:15px;color:#e2c274;font-weight:bold;font-family:'Liberation Sans', sans-serif;transform:scaleX(1.0376);transform-origin:0 0;">118ms</div>
<div class="a" style="left:383px;top:1202px;width:191px;height:20px;background:#1a1a1a;border-radius:2px"></div>
<div class="t" style="left:391.00px;top:1205.30px;font-size:15px;color:#b4b4b4;font-weight:normal;font-family:'Liberation Sans', sans-serif;transform:scaleX(1.0470);transform-origin:0 0;">Toggle Switches / Modes</div>
<div class="a" style="left:767px;top:1201px;width:1px;height:22px;background:#121212;"></div>
<div class="a" style="left:768px;top:1201px;width:232px;height:22px;background:#262626;"></div>
<div class="a" style="left:1972px;top:808px;width:24px;height:391px;background:#262626;"></div>
<div class="a" style="left:1974px;top:911px;width:21px;height:288px;background:#2c2c2c;border-radius:10px"></div>
<svg style="left:0;top:0" width="1999" height="40" viewBox="0 0 1999 40"><rect x="7" y="3.5" width="4.5" height="1" fill="#4a4a4a"/><rect x="7" y="6.4" width="4.5" height="1" fill="#4a4a4a"/><rect x="7" y="9.3" width="4.5" height="1" fill="#4a4a4a"/><rect x="7" y="12.2" width="4.5" height="1" fill="#4a4a4a"/><rect x="7" y="15.1" width="4.5" height="1" fill="#4a4a4a"/><rect x="7" y="18.0" width="4.5" height="1" fill="#4a4a4a"/><rect x="7" y="20.9" width="4.5" height="1" fill="#4a4a4a"/><rect x="7" y="23.8" width="4.5" height="1" fill="#4a4a4a"/><rect x="7" y="26.7" width="4.5" height="1" fill="#4a4a4a"/><rect x="7" y="29.599999999999998" width="4.5" height="1" fill="#4a4a4a"/><path d="M 34.2,5.6 L 46.2,17.4 L 43.6,17.4 L 43.6,26.2 L 37.2,26.2 L 37.2,18.2 L 31.8,18.2 L 31.8,26.2 L 24.8,26.2 L 24.8,17.4 L 22.6,17.4 Z" fill="#b8b8b8" stroke="#b8b8b8" stroke-width="1" stroke-linejoin="round"/><rect x="65" y="1.6" width="30.7" height="29.5" rx="3" fill="#161616"/><path d="M 73,4 L 90.5,21.2 L 80.2,21.6 L 73.4,28.8 Z" fill="#3090e8"/><path d="M 108,18 C 106,16 104,17 105,19 L 111,25 C 113,27 116,27.5 119,27 C 124,26 126,22 126,18 L 127,12 C 127.5,10 125.5,9.5 125,11.5 L 123.5,16 L 123,7 C 123,5 121,5 120.8,7 L 120.3,15 L 119.5,5.2 C 119.3,3.4 117.3,3.4 117.2,5.2 L 116.8,15 L 115.5,6.5 C 115.2,4.7 113.2,4.9 113.3,6.7 L 113.8,17 L 113.5,20 Z" fill="#b8b8b8"/><circle cx="149" cy="12.2" r="7.8" fill="none" stroke="#b8b8b8" stroke-width="1.9"/><line x1="154.5" y1="18" x2="162.5" y2="26.2" stroke="#b8b8b8" stroke-width="2.6" stroke-linecap="round"/><circle cx="199.4" cy="10.8" r="5.4" fill="#666666"/><path d="M 194,10 C 186,11 184,16 189,20" stroke="#666666" stroke-width="1.8" fill="none"/><path d="M 185.5,18 L 193,23.5 L 188,24 Z" fill="#666666"/><path d="M 204.5,14 C 210,17 210,22 201,23" stroke="#666666" stroke-width="1.8" fill="none"/><path d="M 212.5,25.7 L 212.5,30 L 207.8,30 Z" fill="#666666"/><path d="M 233.9,6 V 25.5 M 224,15.8 H 244" stroke="#666666" stroke-width="2.2"/><path d="M 233.9,4.2 L 237.5,9 L 230.3,9 Z M 233.9,27.1 L 237.5,22.5 L 230.3,22.5 Z M 222.5,15.8 L 227,12.3 L 227,19.3 Z M 245.1,15.8 L 240.6,12.3 L 240.6,19.3 Z" fill="#666666"/><path d="M 248.3,25.7 L 248.3,30 L 243.5,30 Z" fill="#666666"/><path d="M 269.8,7 V 22" stroke="#666666" stroke-width="2.6"/><path d="M 269.8,5 L 275,10 L 264.5,10 Z M 269.8,26.3 L 276.6,20 L 263,20 Z" fill="#666666"/><path d="M 283.7,25.7 L 283.7,30 L 279.2,30 Z" fill="#666666"/><path d="M 307,9 A 10.3,10.3 0 0 1 326,18" stroke="#b8b8b8" stroke-width="2.4" fill="none"/><path d="M 304.2,7 L 312.5,7.5 L 304.8,13.8 Z" fill="#b8b8b8"/><circle cx="305.5" cy="20" r="0.9" fill="#b8b8b8"/><circle cx="307.5" cy="23" r="0.9" fill="#b8b8b8"/><circle cx="310.5" cy="25" r="0.9" fill="#b8b8b8"/><circle cx="314" cy="26" r="0.9" fill="#b8b8b8"/><circle cx="317.5" cy="25.8" r="0.9" fill="#b8b8b8"/><circle cx="321" cy="24.3" r="0.9" fill="#b8b8b8"/><circle cx="324" cy="21.5" r="0.9" fill="#b8b8b8"/><rect x="341" y="7" width="21" height="18" fill="none" stroke="#b8b8b8" stroke-width="1.6" stroke-dasharray="3 2.5"/><path d="M 351.5,8.5 L 355,12 L 348,12 Z M 351.5,24 L 355,20.5 L 348,20.5 Z M 342.5,15.8 L 346,12.5 L 346,19 Z M 360.5,15.8 L 357,12.5 L 357,19 Z" fill="#b8b8b8"/><rect x="386.8" y="7" width="21.4" height="18" fill="#454545" stroke="#b8b8b8" stroke-width="1.7"/><path d="M 411.8,25.2 L 411.8,30 L 407,30 Z" fill="#b8b8b8"/><g transform="translate(433,16.3) rotate(45)"><path d="M -3.6,-15 H 3.6 V -10.5 H -3.6 Z M -5.2,-8.5 H 5.2 L 6.5,0 L 0,12 L -6.5,0 Z" fill="#b8b8b8"/><path d="M 0,-1 V 11" stroke="#282828" stroke-width="1.2"/><circle cx="0" cy="-1" r="1.3" fill="#282828"/></g><path d="M 448,25.2 L 448,30 L 443.2,30 Z" fill="#b8b8b8"/><path d="M 459,6.2 H 479.3 V 12 H 477.5 L 476.5,9.5 H 473.1 V 23.8 H 475.5 V 25.9 H 464 V 23.8 H 466.5 V 9.5 H 462 L 461,12 H 459 Z" fill="#b8b8b8"/><path d="M 483.6,25.2 L 483.6,30 L 478.8,30 Z" fill="#b8b8b8"/><path d="M 525.5,4.5 C 527.5,4 527.5,6 526.5,7.5 L 516,19 L 513.5,17 L 523.5,5.5 Z" fill="#b8b8b8"/><path d="M 512.8,17.8 L 515.5,20 C 515,25 511,27.5 504,27 C 506,25 507,20 512.8,17.8 Z" fill="#b8b8b8"/><circle cx="551" cy="8.3" r="3.2" fill="#b8b8b8"/><rect x="549.8" y="10" width="2.4" height="7" fill="#b8b8b8"/><path d="M 546,17 H 556 C 559,17 562.4,18 562.4,21.5 H 539.6 C 539.6,18 543,17 546,17 Z" fill="#b8b8b8"/><rect x="539.6" y="21.5" width="22.8" height="2" fill="#b8b8b8"/><rect x="539.6" y="24.4" width="22.8" height="1.8" fill="#b8b8b8"/><g transform="translate(587.3,15.5) rotate(45)"><rect x="-6.2" y="-11.5" width="12.4" height="16" fill="#b8b8b8"/><rect x="-5.4" y="4.8" width="10.8" height="6.5" fill="#3a3a3a" stroke="#b8b8b8" stroke-width="1.6"/></g><circle cx="626.3" cy="7" r="2" fill="#b8b8b8"/><path d="M 620,15 L 623,12.5 L 628,12 L 632,14 M 625.5,12.5 L 625.5,19 L 622.5,25.5 M 625.5,19 L 629,24" stroke="#b8b8b8" stroke-width="1.7" fill="none" stroke-linecap="round"/><path d="M 646.5,5 C 647.5,5.5 647,7 646,8.5 L 638,16.5 L 636,15 L 644,6 Z" fill="#b8b8b8"/><path d="M 635.3,15.7 L 637.3,17.3 C 637,21 633,23 629.5,22.5 C 631,20.5 632,17 635.3,15.7 Z" fill="#b8b8b8"/><path d="M 647,25.2 L 647,30 L 642.2,30 Z" fill="#b8b8b8"/><g transform="translate(677,14) rotate(45)"><path d="M -6,-11 H 6 V -9 L 4,-8 L 5,1 L 8,3 V 4.5 H -8 V 3 L -5,1 L -4,-8 L -6,-9 Z" fill="#b8b8b8"/><path d="M -1,4.5 L 0,15 L 1,4.5 Z" fill="#b8b8b8"/></g><path d="M 693,25.2 L 693,30 L 688.3,30 Z" fill="#b8b8b8"/><rect x="762.5" y="3.2" width="29.3" height="29" rx="3" fill="none" stroke="#333" stroke-width="1"/><path d="M 775.7,19 V 9.5 M 775.7,19 L 767.5,25 M 775.7,19 L 784,25" stroke="#1f4c82" stroke-width="1.8" fill="none"/><path d="M 775.7,7.3 L 779,11 L 772.4,11 Z M 765.5,26.5 L 766.5,22 L 770,25.5 Z M 786,26.5 L 781.5,25.5 L 785,22 Z" fill="#1f4c82"/><circle cx="808.3" cy="17.9" r="3.6" fill="none" stroke="#464646" stroke-width="1.6"/><path d="M 808.3,14.3 V 8 M 805.3,20 L 799.5,24 M 811.3,20 L 817,24" stroke="#464646" stroke-width="1.6"/><path d="M 808.3,6.2 L 811,9.5 L 805.6,9.5 Z M 798,25 L 799,21 L 802,24 Z M 818.6,25 L 814.6,24 L 817.6,21 Z" fill="#464646"/><path d="M 835.6,14.7 L 850.6,8.4 V 18.2 L 835.6,24.5 Z M 833.5,7.2 L 839,12.5 M 842.5,17.5 L 849.2,23.8" stroke="#464646" stroke-width="1.6" fill="none"/><path d="M 832.5,6.5 L 837.8,7.2 L 833.2,11.5 Z" fill="#464646"/><rect x="881" y="8.8" width="20" height="19.7" rx="2.5" fill="#a6a6a6"/><path d="M 885.5,18.8 L 889.8,23.2 L 896.5,13.8" stroke="#222" stroke-width="2.2" fill="none"/><rect x="983" y="3" width="29.8" height="29.8" rx="3" fill="#141414"/><rect x="1017.3" y="3" width="29.9" height="29.8" rx="3" fill="#141414"/><path d="M 987.8,26.2 L 995.2,19 L 1002.6,26.2" stroke="#3a94ea" stroke-width="1.6" fill="none"/><path d="M 997,17 L 999,15 M 1000.5,13.5 L 1002,12" stroke="#3a94ea" stroke-width="1.6"/><path d="M 1005.8,8.9 V 15.3 L 999.5,8.9 Z" fill="#3a94ea"/><path d="M 1023,13 V 9 H 1027 M 1037.5,9 H 1041.5 V 13 M 1041.5,22 V 26 H 1037.5 M 1027,26 H 1023 V 22" stroke="#3a94ea" stroke-width="1.7" fill="none"/><path d="M 1028,16 V 13.7 H 1030.3 M 1034.3,13.7 H 1036.5 V 16 M 1036.5,19 V 21.3 H 1034.3 M 1030.3,21.3 H 1028 V 19" stroke="#3a94ea" stroke-width="1.6" fill="none"/><path d="M 1679.5,10.5 L 1684.5,15.75 L 1679.5,20.75 M 1687,10.5 L 1692,15.75 L 1687,20.75" stroke="#b8b8b8" stroke-width="2" fill="none" stroke-linecap="round"/><circle cx="1732.3" cy="16" r="5.6" fill="none" stroke="#b8b8b8" stroke-width="1.7"/><line x1="1728.3" y1="20.2" x2="1722.8" y2="25.5" stroke="#b8b8b8" stroke-width="2.3" stroke-linecap="round"/></svg>
<svg style="left:0;top:0" width="1999" height="1227" viewBox="0 0 1999 1227"><path d="M 19.5,244.5 m 0,0" /><circle cx="32" cy="247" r="4.5" fill="none" stroke="#b8b8b8" stroke-width="1.5"/><line x1="28.8" y1="250.2" x2="21" y2="257.5" stroke="#b8b8b8" stroke-width="1.6"/><path d="M 38.5,251.5 H 44.5 L 41.5,254.5 Z" fill="#b8b8b8"/><path d="M 147.4,293.4 L 156.2,285.8 L 165,293.4 Z" fill="#3590e8"/><path d="M 178,283 L 186,281 L 196,291 L 188,299 L 178,289 Z" fill="#b8b8b8" stroke="#b8b8b8" stroke-width="1" stroke-linejoin="round"/><circle cx="182" cy="285" r="1.6" fill="#262626"/><path d="M 8.5,311.5 L 13.5,317 L 8.5,322.5" stroke="#b8b8b8" stroke-width="1.5" fill="none"/><path d="M 27,306.5 H 34 V 309 H 48 V 323 H 27 Z" fill="#bdbdbd"/><rect x="27" y="305.5" width="7" height="1.5" fill="#bdbdbd"/><rect x="443" y="307" width="8" height="5" fill="#b8b8b8"/><path d="M 447,312 V 315 M 441,315 H 453 M 441,315 V 318 M 453,315 V 318" stroke="#b8b8b8" stroke-width="1.3" fill="none"/><rect x="437.5" y="318" width="7.5" height="6" fill="#b8b8b8"/><rect x="449.5" y="318" width="7.5" height="6" fill="#b8b8b8"/><rect x="15" y="741" width="17" height="10" rx="1" fill="none" stroke="#b8b8b8" stroke-width="1.6"/><rect x="18" y="745" width="2" height="2" fill="#b8b8b8"/><rect x="22" y="745" width="7" height="1.5" fill="#b8b8b8"/><path d="M 7,745 V 756.5 H 25 V 753 H 11 V 745 Z" fill="#b8b8b8"/><path d="M 45.6,742 H 64.4 V 753.5 H 45.6 Z" fill="#bdbdbd"/><rect x="45.6" y="738.8" width="7" height="2" fill="#bdbdbd"/><rect x="79" y="739" width="24.5" height="17.5" fill="#b0b0b0"/><rect x="82" y="740.5" width="18.5" height="13" fill="#3a3a3a"/><circle cx="88" cy="744.5" r="3" fill="#3a8ae0"/><rect x="90.5" y="744" width="6" height="5.5" fill="#e03a3a"/><path d="M 87,752.5 L 90.5,747.5 L 94,752.5 Z" fill="#30b040"/><path d="M 117,748 C 120,742 128,738 134,738 C 132,744 128,750 122,755 Z" fill="#5e5e5e"/><circle cx="135.6" cy="749.4" r="4.8" fill="none" stroke="#a8a8a8" stroke-width="1.6"/><line x1="135.6" y1="742.5" x2="135.6" y2="749" stroke="#a8a8a8" stroke-width="1.6"/><path d="M 221,741.5 H 237 M 226,741.5 V 739 H 232 V 741.5 M 223,743 L 224.5,755 H 233.5 L 235,743 M 227,745 V 753 M 229,745 V 753 M 231,745 V 753" stroke="#b8b8b8" stroke-width="1.4" fill="none"/><path d="M 482.5,55 L 489,61.5 M 489,55 L 482.5,61.5" stroke="#a0a0a0" stroke-width="1.3"/><rect x="534.5" y="53" width="11" height="8.8" fill="#b0b0b0"/><path d="M 536.5,53 V 50.5 A 3.2,3.2 0 0 1 542.5,49.5" stroke="#b0b0b0" stroke-width="1.6" fill="none"/><circle cx="540" cy="56.5" r="1.3" fill="#262626"/><rect x="539.4" y="56.5" width="1.2" height="3" fill="#262626"/><rect x="735.5" y="730.5" width="30" height="26" rx="3" fill="#222"/><path d="M 758.5,742 V 736 H 741 V 752 H 749" stroke="#b8b8b8" stroke-width="1.5" fill="none"/><path d="M 752,738 L 746,745.5 H 750 L 748,751 L 754.5,743.5 H 750.5 Z" fill="#b8b8b8"/><path d="M 754.5,748.5 H 761 L 757.8,752 Z" fill="#b8b8b8"/><rect x="772.0" y="736.0" width="5.1" height="5.3" fill="#bdbdbd"/><rect x="772.0" y="741.3" width="5.1" height="5.3" fill="#6a6a6a"/><rect x="772.0" y="746.6" width="5.1" height="5.3" fill="#bdbdbd"/><rect x="777.1" y="736.0" width="5.1" height="5.3" fill="#6a6a6a"/><rect x="777.1" y="741.3" width="5.1" height="5.3" fill="#bdbdbd"/><rect x="777.1" y="746.6" width="5.1" height="5.3" fill="#6a6a6a"/><rect x="782.2" y="736.0" width="5.1" height="5.3" fill="#bdbdbd"/><rect x="782.2" y="741.3" width="5.1" height="5.3" fill="#6a6a6a"/><rect x="782.2" y="746.6" width="5.1" height="5.3" fill="#bdbdbd"/><rect x="787.3" y="736.0" width="5.1" height="5.3" fill="#6a6a6a"/><rect x="787.3" y="741.3" width="5.1" height="5.3" fill="#bdbdbd"/><rect x="787.3" y="746.6" width="5.1" height="5.3" fill="#6a6a6a"/><rect x="772.5" y="736.5" width="19.5" height="15.5" fill="none" stroke="#bdbdbd" stroke-width="1.2"/><rect x="799.2" y="731.8" width="28.8" height="24" rx="3" fill="#161616"/><path d="M 805,743.2 L 812.4,735.8 H 822.6 V 750.7 H 805 Z" stroke="#3b9eea" stroke-width="1.5" fill="none"/><circle cx="805" cy="743.2" r="1.6" fill="#3b9eea"/><circle cx="812.4" cy="735.8" r="1.6" fill="#3b9eea"/><circle cx="822.6" cy="735.8" r="1.6" fill="#3b9eea"/><circle cx="822.6" cy="743" r="1.6" fill="#3b9eea"/><circle cx="822.6" cy="750.7" r="1.6" fill="#3b9eea"/><circle cx="805" cy="750.7" r="1.6" fill="#3b9eea"/><rect x="835.5" y="735.5" width="19.5" height="16" fill="none" stroke="#b8b8b8" stroke-width="1.5"/><rect x="840.8" y="740.5" width="10" height="6.8" fill="#b8b8b8"/><rect x="867" y="736" width="18" height="12" fill="none" stroke="#b8b8b8" stroke-width="1.3"/><path d="M 876,733 V 751 M 864.5,742 H 887.5" stroke="#b8b8b8" stroke-width="1.3"/><path d="M 879.5,750.5 H 886 L 882.7,754 Z" fill="#b8b8b8"/><circle cx="921.9" cy="738.2" r="4.4" fill="#ff2a1a"/><circle cx="917.8" cy="744.6" r="4.4" fill="#20c020"/><circle cx="926" cy="744.6" r="4.4" fill="#4a6af8"/><path d="M 925,750.5 H 931.5 L 928.3,754 Z" fill="#b8b8b8"/><circle cx="954.3" cy="743.2" r="8.7" fill="#b8b8b8"/><path d="M 956.71,743.85 L 957.88,751.46" stroke="#262626" stroke-width="1.2"/><path d="M 954.95,745.61 L 948.94,750.43" stroke="#262626" stroke-width="1.2"/><path d="M 952.53,744.97 L 945.36,742.17" stroke="#262626" stroke-width="1.2"/><path d="M 951.89,742.55 L 950.72,734.94" stroke="#262626" stroke-width="1.2"/><path d="M 953.65,740.79 L 959.66,735.97" stroke="#262626" stroke-width="1.2"/><path d="M 956.07,741.43 L 963.24,744.23" stroke="#262626" stroke-width="1.2"/><circle cx="954.3" cy="743.2" r="2.6" fill="#262626"/><path d="M 1038.6,739 H 1043 L 1045,735.8 H 1052.5 L 1054.5,739 H 1059.2 V 752 H 1038.6 Z" fill="#b8b8b8"/><circle cx="1048.9" cy="745.2" r="3.6" fill="#262626"/><circle cx="1048.9" cy="745.2" r="2" fill="#b8b8b8"/><path d="M 1070,745 Q 1078,737 1086,745 Q 1078,753 1070,745 Z" fill="#444"/><circle cx="1078" cy="745" r="2.5" fill="#262626"/><rect x="1081" y="734" width="9.5" height="7" fill="#444"/><circle cx="1084.5" cy="737.5" r="1.7" fill="#262626"/><path d="M 554.5,741.5 L 560.2,747 L 566,741.5 M 701,741.5 L 706.8,747 L 712.6,741.5" stroke="#c0c0c0" stroke-width="1.5" fill="none"/><path d="M 17.3,783.8 L 24.4,790.8 M 24.4,783.8 L 17.3,790.8" stroke="#a0a0a0" stroke-width="1.3"/><circle cx="167" cy="827" r="4.5" fill="none" stroke="#b8b8b8" stroke-width="1.5"/><line x1="163.8" y1="830.2" x2="156" y2="837.5" stroke="#b8b8b8" stroke-width="1.6"/><path d="M 173.5,831.5 H 179.5 L 176.5,834.5 Z" fill="#b8b8b8"/><path d="M 549,825 H 560 M 552,823.5 H 557 V 826.5 H 552 Z" stroke="#b8b8b8" stroke-width="1.4" fill="#b8b8b8"/><path d="M 560,825 V 837 H 564 M 560,830 H 564" stroke="#b8b8b8" stroke-width="1.4" fill="none"/><rect x="564" y="823.5" width="6" height="4" fill="#b8b8b8"/><rect x="564" y="828.5" width="6" height="3.5" fill="#b8b8b8"/><rect x="564" y="834" width="6" height="4" fill="#b8b8b8"/><path d="M 566.5,839.5 H 572 L 569.2,842 Z" fill="#b8b8b8"/><path d="M 602.5,831.5 C 602.5,822.5 614.5,822.5 614.5,831.5 Z" fill="#b8b8b8"/><circle cx="606.2" cy="828.0" r="1.4" fill="#333"/><circle cx="610.8" cy="828.0" r="1.4" fill="#333"/><rect x="606.9" y="830.5" width="3.2" height="6.5" rx="1.5" fill="#b8b8b8"/><path d="M 599.5,834.0 H 605.5 M 611.5,834.0 H 617.5 M 600.5,831.5 H 616.5" stroke="#b8b8b8" stroke-width="1.3"/><rect x="597.2" y="832.8" width="22.6" height="6.4" fill="#4a4a4a"/><path d="M 602.5,831.5 C 602.5,822.5 614.5,822.5 614.5,831.5 Z" fill="#b8b8b8"/><circle cx="606.2" cy="828.0" r="1.4" fill="#333"/><circle cx="610.8" cy="828.0" r="1.4" fill="#333"/><rect x="606.9" y="830.5" width="3.2" height="6.5" rx="1.5" fill="#b8b8b8"/><path d="M 599.5,834.0 H 605.5 M 611.5,834.0 H 617.5 M 600.5,831.5 H 616.5" stroke="#b8b8b8" stroke-width="1.3"/><rect x="641" y="821" width="15" height="15" fill="#b8b8b8"/><rect x="643" y="822" width="1.5" height="13" fill="#444"/><rect x="652.5" y="822" width="1.5" height="13" fill="#444"/><rect x="646" y="828" width="5" height="1.6" fill="#444"/><path d="M 635.5,825 V 840.5 H 650 V 837" stroke="#b8b8b8" stroke-width="1.6" fill="none"/><path d="M 638.5,825 V 837.5" stroke="#b8b8b8" stroke-width="1.2" stroke-dasharray="1 1"/><circle cx="686" cy="828.5" r="7" fill="#555" stroke="#b8b8b8" stroke-width="1.5"/><path d="M 676.5,832 A 7,7 0 0 0 687,839" stroke="#b8b8b8" stroke-width="1.4" fill="none"/><path d="M 674,835 A 7,7 0 0 0 684,841.5" stroke="#b8b8b8" stroke-width="1.4" fill="none"/><path d="M 679,829.5 A 7,7 0 0 0 690,836" stroke="#b8b8b8" stroke-width="1.4" fill="none"/><rect x="722" y="822.5" width="21" height="18.5" fill="none" stroke="#b8b8b8" stroke-width="1.6"/><path d="M 725,828 C 731,828 732,837 739,837" stroke="#b8b8b8" stroke-width="1.4" fill="none"/><path d="M 728,822 V 819.5 M 733,822 V 819.5 M 738,822 V 819.5 M 721.5,828 H 719.5 M 721.5,833 H 719.5" stroke="#b8b8b8" stroke-width="1.2"/><path d="M 11.0,871.5 Q 18.5,862.5 26.0,871.5 Q 18.5,880.5 11.0,871.5 Z" fill="#b8b8b8"/><circle cx="18.5" cy="871.5" r="3.3" fill="#2a2a2a"/><circle cx="18.8" cy="871.2" r="1.8" fill="#555"/><circle cx="19.5" cy="870.5" r="0.8" fill="#ccc"/><path d="M 31,867.5 H 35 L 40,864 V 879.5 L 35,876 H 31 Z" fill="#b8b8b8"/><path d="M 42,868 A 5,5 0 0 1 42,876 M 43.5,865 A 8.5,8.5 0 0 1 43.5,879" stroke="#b8b8b8" stroke-width="1.4" fill="none"/><circle cx="61" cy="872" r="5.3" fill="#b8b8b8"/><rect x="76" y="870" width="13" height="8.5" fill="#b8b8b8"/><path d="M 78.8,870 V 867.5 A 3.7,3.7 0 0 1 86.2,867.5 V 870" stroke="#b8b8b8" stroke-width="1.8" fill="none"/><path d="M 81.5,876 L 82.5,872.5 L 83.5,876 Z" fill="#262626"/><circle cx="82.5" cy="873" r="1.2" fill="#262626"/><path d="M 120,864 H 128 L 137,873 L 128.5,881 L 120,872 Z" fill="#b8b8b8" stroke="#b8b8b8" stroke-width="1" stroke-linejoin="round"/><circle cx="123" cy="866.5" r="1.5" fill="#262626"/><path d="M 389.2,871 C 389.2,862 401.2,862 401.2,871 Z" fill="#b8b8b8"/><circle cx="392.9" cy="867.5" r="1.4" fill="#333"/><circle cx="397.5" cy="867.5" r="1.4" fill="#333"/><rect x="393.59999999999997" y="870" width="3.2" height="6.5" rx="1.5" fill="#b8b8b8"/><path d="M 386.2,873.5 H 392.2 M 398.2,873.5 H 404.2 M 387.2,871 H 403.2" stroke="#b8b8b8" stroke-width="1.3"/><circle cx="416.6" cy="871.4" r="3" fill="none" stroke="#b8b8b8" stroke-width="1.3"/><line x1="421.10" y1="871.40" x2="423.60" y2="871.40" stroke="#b8b8b8" stroke-width="1.3"/><line x1="419.78" y1="874.58" x2="421.55" y2="876.35" stroke="#b8b8b8" stroke-width="1.3"/><line x1="416.60" y1="875.90" x2="416.60" y2="878.40" stroke="#b8b8b8" stroke-width="1.3"/><line x1="413.42" y1="874.58" x2="411.65" y2="876.35" stroke="#b8b8b8" stroke-width="1.3"/><line x1="412.10" y1="871.40" x2="409.60" y2="871.40" stroke="#b8b8b8" stroke-width="1.3"/><line x1="413.42" y1="868.22" x2="411.65" y2="866.45" stroke="#b8b8b8" stroke-width="1.3"/><line x1="416.60" y1="866.90" x2="416.60" y2="864.40" stroke="#b8b8b8" stroke-width="1.3"/><line x1="419.78" y1="868.22" x2="421.55" y2="866.45" stroke="#b8b8b8" stroke-width="1.3"/><path d="M 430,865.5 L 443.5,878" stroke="#b8b8b8" stroke-width="1.5" stroke-dasharray="2 1.4"/><text x="451" y="877" font-family="Liberation Serif" font-style="italic" font-size="17" fill="#b8b8b8">fx</text><rect x="473" y="865" width="15" height="13" fill="none" stroke="#b8b8b8" stroke-width="1.4"/><rect x="475" y="865.5" width="1.2" height="12" fill="#b8b8b8"/><rect x="484.8" y="865.5" width="1.2" height="12" fill="#b8b8b8"/><rect x="478" y="870.5" width="5" height="1.5" fill="#b8b8b8"/><path d="M 470.5,868 V 880 H 486" stroke="#b8b8b8" stroke-width="1.2" fill="none"/><circle cx="506" cy="868" r="5.8" fill="#666" stroke="#b8b8b8" stroke-width="1.3"/><path d="M 498,871 A 5.8,5.8 0 0 0 505,878 M 496,874 A 5.8,5.8 0 0 0 502,880" stroke="#b8b8b8" stroke-width="1.2" fill="none"/><circle cx="524.4" cy="872" r="6.3" fill="none" stroke="#b8b8b8" stroke-width="1.5"/><path d="M 528.8,867.5 A 6.3,6.3 0 0 1 520,876.5 Z" fill="#b8b8b8"/><path d="M 546,865.5 L 552,868.5 V 875 L 546,878 L 540,875 V 868.5 Z M 540,868.5 L 546,871.5 L 552,868.5 M 546,871.5 V 878" stroke="#b8b8b8" stroke-width="1.3" fill="none" stroke-linejoin="round"/><path d="M 10.5,896.0 Q 18,887.0 25.5,896.0 Q 18,905.0 10.5,896.0 Z" fill="#b8b8b8"/><circle cx="18" cy="896.0" r="3.3" fill="#2a2a2a"/><circle cx="18.3" cy="895.7" r="1.8" fill="#555"/><circle cx="19" cy="895.0" r="0.8" fill="#ccc"/><path d="M 109,895.0 L 114,900.5 L 119,895.0" stroke="#c0c0c0" stroke-width="1.5" fill="none"/><text x="199" y="902.5" font-family="Liberation Serif" font-weight="bold" font-size="17" fill="#b8b8b8">T</text><path d="M 389.2,896.5 C 389.2,887.5 401.2,887.5 401.2,896.5 Z" fill="#b8b8b8"/><circle cx="392.9" cy="893.0" r="1.4" fill="#333"/><circle cx="397.5" cy="893.0" r="1.4" fill="#333"/><rect x="393.59999999999997" y="895.5" width="3.2" height="6.5" rx="1.5" fill="#b8b8b8"/><path d="M 386.2,899.0 H 392.2 M 398.2,899.0 H 404.2 M 387.2,896.5 H 403.2" stroke="#b8b8b8" stroke-width="1.3"/><circle cx="416.8" cy="896.0" r="3" fill="none" stroke="#9a9a9a" stroke-width="1.1"/><line x1="421.30" y1="896.00" x2="423.80" y2="896.00" stroke="#9a9a9a" stroke-width="1.1"/><line x1="419.98" y1="899.18" x2="421.75" y2="900.95" stroke="#9a9a9a" stroke-width="1.1"/><line x1="416.80" y1="900.50" x2="416.80" y2="903.00" stroke="#9a9a9a" stroke-width="1.1"/><line x1="413.62" y1="899.18" x2="411.85" y2="900.95" stroke="#9a9a9a" stroke-width="1.1"/><line x1="412.30" y1="896.00" x2="409.80" y2="896.00" stroke="#9a9a9a" stroke-width="1.1"/><line x1="413.62" y1="892.82" x2="411.85" y2="891.05" stroke="#9a9a9a" stroke-width="1.1"/><line x1="416.80" y1="891.50" x2="416.80" y2="889.00" stroke="#9a9a9a" stroke-width="1.1"/><line x1="419.98" y1="892.82" x2="421.75" y2="891.05" stroke="#9a9a9a" stroke-width="1.1"/><line x1="430.7" y1="903.0" x2="445.4" y2="889.0" stroke="#b8b8b8" stroke-width="1.7"/><polyline points="589.92,896.27 589.89,896.49 589.88,896.72 589.91,896.96 589.98,897.21 590.09,897.45 590.23,897.68 590.41,897.89 590.62,898.09 590.87,898.26 591.14,898.39 591.45,898.49 591.77,898.55 592.10,898.57 592.45,898.54 592.80,898.46 593.14,898.33 593.46,898.15 593.77,897.92 594.05,897.64 594.30,897.33 594.51,896.97 594.67,896.58 594.78,896.16 594.83,895.72 594.82,895.27 594.76,894.82 594.62,894.37 594.43,893.93 594.17,893.51 593.86,893.13 593.49,892.78 593.06,892.48 592.60,892.24 592.09,892.06 591.56,891.94 591.01,891.89 590.44,891.92 589.88,892.03 589.32,892.21 588.79,892.47 588.29,892.80 587.82,893.21 587.41,893.68 587.06,894.20 586.78,894.78 586.58,895.40 586.46,896.05 586.42,896.72 586.47,897.39 586.62,898.07 586.85,898.73 587.18,899.36 587.59,899.95 588.08,900.48 588.64,900.96 589.28,901.36 589.96,901.67 590.70,901.90 591.46,902.03 592.25,902.06 593.04,901.98 593.82,901.79 594.58,901.51 595.31,901.11 595.98,900.62 596.59,900.04 597.13,899.38 597.58,898.64 597.93,897.85 598.18,897.00 598.31,896.12 598.33,895.22 598.22,894.31 598.00,893.42 597.66,892.56 597.20,891.74 596.63,890.97 595.96,890.29 595.20,889.69" fill="none" stroke="#a8a8a8" stroke-width="1.5" stroke-linecap="round"/><path d="M 720,894.0 L 725.5,899.0 L 731,894.0" stroke="#d0d0d0" stroke-width="1.6" fill="none"/><path d="M 13,920.95 L 21.5,915.25 V 926.6500000000001 Z M 66,920.95 L 57.5,915.25 V 926.6500000000001 Z" fill="#b8b8b8"/><path d="M 39.5,914.95 L 45.5,920.95 L 39.5,926.95 L 33.5,920.95 Z" fill="#474747" stroke="#b8b8b8" stroke-width="1.5"/><circle cx="184" cy="922.75" r="7" fill="none" stroke="#3b9eea" stroke-width="1.8"/><path d="M 181,913.75 H 187 M 184,913.75 V 915.95 M 176.5,916.45 L 178.5,918.1500000000001 M 184,922.75 L 188.5,918.45" stroke="#3b9eea" stroke-width="1.8"/><path d="M 201.7,913.45 V 928.45 H 217.7 M 202.7,917.45 L 206.7,924.45 L 210.7,919.45 L 215.7,922.45" stroke="#b8b8b8" stroke-width="1.3" fill="none"/><polyline points="608.82,921.02 608.79,921.24 608.78,921.47 608.81,921.71 608.88,921.96 608.99,922.20 609.13,922.43 609.31,922.64 609.52,922.84 609.77,923.01 610.04,923.14 610.35,923.24 610.67,923.30 611.00,923.32 611.35,923.29 611.70,923.21 612.04,923.08 612.36,922.90 612.67,922.67 612.95,922.39 613.20,922.08 613.41,921.72 613.57,921.33 613.68,920.91 613.73,920.47 613.72,920.02 613.66,919.57 613.52,919.12 613.33,918.68 613.07,918.26 612.76,917.88 612.39,917.53 611.96,917.23 611.50,916.99 610.99,916.81 610.46,916.69 609.91,916.64 609.34,916.67 608.78,916.78 608.22,916.96 607.69,917.22 607.19,917.55 606.72,917.96 606.31,918.43 605.96,918.95 605.68,919.53 605.48,920.15 605.36,920.80 605.32,921.47 605.37,922.14 605.52,922.82 605.75,923.48 606.08,924.11 606.49,924.70 606.98,925.23 607.54,925.71 608.18,926.11 608.86,926.42 609.60,926.65 610.36,926.78 611.15,926.81 611.94,926.73 612.72,926.54 613.48,926.26 614.21,925.86 614.88,925.37 615.49,924.79 616.03,924.13 616.48,923.39 616.83,922.60 617.08,921.75 617.21,920.87 617.23,919.97 617.12,919.06 616.90,918.17 616.56,917.31 616.10,916.49 615.53,915.72 614.86,915.04 614.10,914.44" fill="none" stroke="#a8a8a8" stroke-width="1.5" stroke-linecap="round"/><path d="M 778.6,912.0500000000001 L 788.0,921.45 L 778.6,930.85 L 769.2,921.45 Z" fill="#142638" stroke="#2f8fe8" stroke-width="2.3"/><path d="M 778.6,915.1500000000001 L 784.9,921.45 L 778.6,927.75 Z" fill="#8a8a8a"/><path d="M 778.6,915.1500000000001 L 772.3000000000001,921.45 L 778.6,927.75 Z" fill="#c4c4c4"/><path d="M 1283.7,912.0500000000001 L 1293.1000000000001,921.45 L 1283.7,930.85 L 1274.3,921.45 Z" fill="#142638" stroke="#2f8fe8" stroke-width="2.3"/><path d="M 1283.7,915.1500000000001 L 1290.0,921.45 L 1283.7,927.75 Z" fill="#8a8a8a"/><path d="M 1283.7,915.1500000000001 L 1277.4,921.45 L 1283.7,927.75 Z" fill="#c4c4c4"/><path d="M 13,945.4 L 21.5,939.6999999999999 V 951.1 Z M 66,945.4 L 57.5,939.6999999999999 V 951.1 Z" fill="#b8b8b8"/><path d="M 39.5,939.4 L 45.5,945.4 L 39.5,951.4 L 33.5,945.4 Z" fill="#474747" stroke="#b8b8b8" stroke-width="1.5"/><circle cx="184" cy="947.1999999999999" r="7" fill="none" stroke="#3b9eea" stroke-width="1.8"/><path d="M 181,938.1999999999999 H 187 M 184,938.1999999999999 V 940.4 M 176.5,940.9 L 178.5,942.6 M 184,947.1999999999999 L 188.5,942.9" stroke="#3b9eea" stroke-width="1.8"/><path d="M 201.7,937.9 V 952.9 H 217.7 M 202.7,941.9 L 206.7,948.9 L 210.7,943.9 L 215.7,946.9" stroke="#b8b8b8" stroke-width="1.3" fill="none"/><polyline points="608.82,945.47 608.79,945.69 608.78,945.92 608.81,946.16 608.88,946.41 608.99,946.65 609.13,946.88 609.31,947.09 609.52,947.29 609.77,947.46 610.04,947.59 610.35,947.69 610.67,947.75 611.00,947.77 611.35,947.74 611.70,947.66 612.04,947.53 612.36,947.35 612.67,947.12 612.95,946.84 613.20,946.53 613.41,946.17 613.57,945.78 613.68,945.36 613.73,944.92 613.72,944.47 613.66,944.02 613.52,943.57 613.33,943.13 613.07,942.71 612.76,942.33 612.39,941.98 611.96,941.68 611.50,941.44 610.99,941.26 610.46,941.14 609.91,941.09 609.34,941.12 608.78,941.23 608.22,941.41 607.69,941.67 607.19,942.00 606.72,942.41 606.31,942.88 605.96,943.40 605.68,943.98 605.48,944.60 605.36,945.25 605.32,945.92 605.37,946.59 605.52,947.27 605.75,947.93 606.08,948.56 606.49,949.15 606.98,949.68 607.54,950.16 608.18,950.56 608.86,950.87 609.60,951.10 610.36,951.23 611.15,951.26 611.94,951.18 612.72,950.99 613.48,950.71 614.21,950.31 614.88,949.82 615.49,949.24 616.03,948.58 616.48,947.84 616.83,947.05 617.08,946.20 617.21,945.32 617.23,944.42 617.12,943.51 616.90,942.62 616.56,941.76 616.10,940.94 615.53,940.17 614.86,939.49 614.10,938.89" fill="none" stroke="#a8a8a8" stroke-width="1.5" stroke-linecap="round"/><path d="M 391,942.9 H 389 A 3,3 0 0 0 389,948.9 H 393 A 3,3 0 0 0 395.5,945.9 M 398,942.9 H 400 A 3,3 0 0 1 400,948.9 H 396 A 3,3 0 0 1 393.5,945.9" stroke="#b8b8b8" stroke-width="1.7" fill="none"/><path d="M 778.6,936.5 L 788.0,945.9 L 778.6,955.3 L 769.2,945.9 Z" fill="#142638" stroke="#2f8fe8" stroke-width="2.3"/><path d="M 778.6,939.6 L 784.9,945.9 L 778.6,952.1999999999999 Z" fill="#8a8a8a"/><path d="M 778.6,939.6 L 772.3000000000001,945.9 L 778.6,952.1999999999999 Z" fill="#c4c4c4"/><path d="M 1283.7,936.5 L 1293.1000000000001,945.9 L 1283.7,955.3 L 1274.3,945.9 Z" fill="#142638" stroke="#2f8fe8" stroke-width="2.3"/><path d="M 1283.7,939.6 L 1290.0,945.9 L 1283.7,952.1999999999999 Z" fill="#8a8a8a"/><path d="M 1283.7,939.6 L 1277.4,945.9 L 1283.7,952.1999999999999 Z" fill="#c4c4c4"/><path d="M 10.5,969.35 Q 18,960.35 25.5,969.35 Q 18,978.35 10.5,969.35 Z" fill="#b8b8b8"/><circle cx="18" cy="969.35" r="3.3" fill="#2a2a2a"/><circle cx="18.3" cy="969.0500000000001" r="1.8" fill="#555"/><circle cx="19" cy="968.35" r="0.8" fill="#ccc"/><path d="M 109,968.35 L 114,973.85 L 119,968.35" stroke="#c0c0c0" stroke-width="1.5" fill="none"/><path d="M 199.1,961.35 H 208.6 L 213.6,966.35 V 978.85 H 199.1 Z" fill="#f2f2f2"/><path d="M 208.6,961.35 V 966.35 H 213.6" fill="#d8d8d8"/><rect x="202.9" y="966.35" width="7.5" height="4.5" rx="1.5" fill="#8fb4e8"/><rect x="202.9" y="970.35" width="7.5" height="3" fill="#3a4a8a"/><rect x="202.9" y="973.35" width="7.5" height="1.5" fill="#b8c8d0"/><path d="M 389.2,969.85 C 389.2,960.85 401.2,960.85 401.2,969.85 Z" fill="#b8b8b8"/><circle cx="392.9" cy="966.35" r="1.4" fill="#333"/><circle cx="397.5" cy="966.35" r="1.4" fill="#333"/><rect x="393.59999999999997" y="968.85" width="3.2" height="6.5" rx="1.5" fill="#b8b8b8"/><path d="M 386.2,972.35 H 392.2 M 398.2,972.35 H 404.2 M 387.2,969.85 H 403.2" stroke="#b8b8b8" stroke-width="1.3"/><line x1="430.7" y1="976.35" x2="445.4" y2="962.35" stroke="#b8b8b8" stroke-width="1.7"/><polyline points="589.92,969.62 589.89,969.84 589.88,970.07 589.91,970.31 589.98,970.56 590.09,970.80 590.23,971.03 590.41,971.24 590.62,971.44 590.87,971.61 591.14,971.74 591.45,971.84 591.77,971.90 592.10,971.92 592.45,971.89 592.80,971.81 593.14,971.68 593.46,971.50 593.77,971.27 594.05,970.99 594.30,970.68 594.51,970.32 594.67,969.93 594.78,969.51 594.83,969.07 594.82,968.62 594.76,968.17 594.62,967.72 594.43,967.28 594.17,966.86 593.86,966.48 593.49,966.13 593.06,965.83 592.60,965.59 592.09,965.41 591.56,965.29 591.01,965.24 590.44,965.27 589.88,965.38 589.32,965.56 588.79,965.82 588.29,966.15 587.82,966.56 587.41,967.03 587.06,967.55 586.78,968.13 586.58,968.75 586.46,969.40 586.42,970.07 586.47,970.74 586.62,971.42 586.85,972.08 587.18,972.71 587.59,973.30 588.08,973.83 588.64,974.31 589.28,974.71 589.96,975.02 590.70,975.25 591.46,975.38 592.25,975.41 593.04,975.33 593.82,975.14 594.58,974.86 595.31,974.46 595.98,973.97 596.59,973.39 597.13,972.73 597.58,971.99 597.93,971.20 598.18,970.35 598.31,969.47 598.33,968.57 598.22,967.66 598.00,966.77 597.66,965.91 597.20,965.09 596.63,964.32 595.96,963.64 595.20,963.04" fill="none" stroke="#a8a8a8" stroke-width="1.5" stroke-linecap="round"/><path d="M 720,967.35 L 725.5,972.35 L 731,967.35" stroke="#d0d0d0" stroke-width="1.6" fill="none"/><path d="M 13,994.3 L 21.5,988.5999999999999 V 1000.0 Z M 66,994.3 L 57.5,988.5999999999999 V 1000.0 Z" fill="#b8b8b8"/><path d="M 39.5,988.3 L 45.5,994.3 L 39.5,1000.3 L 33.5,994.3 Z" fill="#474747" stroke="#b8b8b8" stroke-width="1.5"/><circle cx="184" cy="996.0999999999999" r="7" fill="none" stroke="#3b9eea" stroke-width="1.8"/><path d="M 181,987.0999999999999 H 187 M 184,987.0999999999999 V 989.3 M 176.5,989.8 L 178.5,991.5 M 184,996.0999999999999 L 188.5,991.8" stroke="#3b9eea" stroke-width="1.8"/><path d="M 201.7,986.8 V 1001.8 H 217.7 M 202.7,990.8 L 206.7,997.8 L 210.7,992.8 L 215.7,995.8" stroke="#b8b8b8" stroke-width="1.3" fill="none"/><polyline points="608.82,994.37 608.79,994.59 608.78,994.82 608.81,995.06 608.88,995.31 608.99,995.55 609.13,995.78 609.31,995.99 609.52,996.19 609.77,996.36 610.04,996.49 610.35,996.59 610.67,996.65 611.00,996.67 611.35,996.64 611.70,996.56 612.04,996.43 612.36,996.25 612.67,996.02 612.95,995.74 613.20,995.43 613.41,995.07 613.57,994.68 613.68,994.26 613.73,993.82 613.72,993.37 613.66,992.92 613.52,992.47 613.33,992.03 613.07,991.61 612.76,991.23 612.39,990.88 611.96,990.58 611.50,990.34 610.99,990.16 610.46,990.04 609.91,989.99 609.34,990.02 608.78,990.13 608.22,990.31 607.69,990.57 607.19,990.90 606.72,991.31 606.31,991.78 605.96,992.30 605.68,992.88 605.48,993.50 605.36,994.15 605.32,994.82 605.37,995.49 605.52,996.17 605.75,996.83 606.08,997.46 606.49,998.05 606.98,998.58 607.54,999.06 608.18,999.46 608.86,999.77 609.60,1000.00 610.36,1000.13 611.15,1000.16 611.94,1000.08 612.72,999.89 613.48,999.61 614.21,999.21 614.88,998.72 615.49,998.14 616.03,997.48 616.48,996.74 616.83,995.95 617.08,995.10 617.21,994.22 617.23,993.32 617.12,992.41 616.90,991.52 616.56,990.66 616.10,989.84 615.53,989.07 614.86,988.39 614.10,987.79" fill="none" stroke="#a8a8a8" stroke-width="1.5" stroke-linecap="round"/><path d="M 778.6,985.4 L 788.0,994.8 L 778.6,1004.1999999999999 L 769.2,994.8 Z" fill="#142638" stroke="#2f8fe8" stroke-width="2.3"/><path d="M 778.6,988.5 L 784.9,994.8 L 778.6,1001.0999999999999 Z" fill="#8a8a8a"/><path d="M 778.6,988.5 L 772.3000000000001,994.8 L 778.6,1001.0999999999999 Z" fill="#c4c4c4"/><path d="M 1283.7,985.4 L 1293.1000000000001,994.8 L 1283.7,1004.1999999999999 L 1274.3,994.8 Z" fill="#142638" stroke="#2f8fe8" stroke-width="2.3"/><path d="M 1283.7,988.5 L 1290.0,994.8 L 1283.7,1001.0999999999999 Z" fill="#8a8a8a"/><path d="M 1283.7,988.5 L 1277.4,994.8 L 1283.7,1001.0999999999999 Z" fill="#c4c4c4"/><path d="M 10.5,1018.25 Q 18,1009.25 25.5,1018.25 Q 18,1027.25 10.5,1018.25 Z" fill="#b8b8b8"/><circle cx="18" cy="1018.25" r="3.3" fill="#2a2a2a"/><circle cx="18.3" cy="1017.95" r="1.8" fill="#555"/><circle cx="19" cy="1017.25" r="0.8" fill="#ccc"/><path d="M 109,1017.25 L 114,1022.75 L 119,1017.25" stroke="#c0c0c0" stroke-width="1.5" fill="none"/><path d="M 199.1,1010.25 H 208.6 L 213.6,1015.25 V 1027.75 H 199.1 Z" fill="#f2f2f2"/><path d="M 208.6,1010.25 V 1015.25 H 213.6" fill="#d8d8d8"/><rect x="202.9" y="1015.25" width="7.5" height="4.5" rx="1.5" fill="#8fb4e8"/><rect x="202.9" y="1019.25" width="7.5" height="3" fill="#3a4a8a"/><rect x="202.9" y="1022.25" width="7.5" height="1.5" fill="#b8c8d0"/><path d="M 389.2,1018.75 C 389.2,1009.75 401.2,1009.75 401.2,1018.75 Z" fill="#b8b8b8"/><circle cx="392.9" cy="1015.25" r="1.4" fill="#333"/><circle cx="397.5" cy="1015.25" r="1.4" fill="#333"/><rect x="393.59999999999997" y="1017.75" width="3.2" height="6.5" rx="1.5" fill="#b8b8b8"/><path d="M 386.2,1021.25 H 392.2 M 398.2,1021.25 H 404.2 M 387.2,1018.75 H 403.2" stroke="#b8b8b8" stroke-width="1.3"/><line x1="430.7" y1="1025.25" x2="445.4" y2="1011.25" stroke="#b8b8b8" stroke-width="1.7"/><polyline points="589.92,1018.52 589.89,1018.74 589.88,1018.97 589.91,1019.21 589.98,1019.46 590.09,1019.70 590.23,1019.93 590.41,1020.14 590.62,1020.34 590.87,1020.51 591.14,1020.64 591.45,1020.74 591.77,1020.80 592.10,1020.82 592.45,1020.79 592.80,1020.71 593.14,1020.58 593.46,1020.40 593.77,1020.17 594.05,1019.89 594.30,1019.58 594.51,1019.22 594.67,1018.83 594.78,1018.41 594.83,1017.97 594.82,1017.52 594.76,1017.07 594.62,1016.62 594.43,1016.18 594.17,1015.76 593.86,1015.38 593.49,1015.03 593.06,1014.73 592.60,1014.49 592.09,1014.31 591.56,1014.19 591.01,1014.14 590.44,1014.17 589.88,1014.28 589.32,1014.46 588.79,1014.72 588.29,1015.05 587.82,1015.46 587.41,1015.93 587.06,1016.45 586.78,1017.03 586.58,1017.65 586.46,1018.30 586.42,1018.97 586.47,1019.64 586.62,1020.32 586.85,1020.98 587.18,1021.61 587.59,1022.20 588.08,1022.73 588.64,1023.21 589.28,1023.61 589.96,1023.92 590.70,1024.15 591.46,1024.28 592.25,1024.31 593.04,1024.23 593.82,1024.04 594.58,1023.76 595.31,1023.36 595.98,1022.87 596.59,1022.29 597.13,1021.63 597.58,1020.89 597.93,1020.10 598.18,1019.25 598.31,1018.37 598.33,1017.47 598.22,1016.56 598.00,1015.67 597.66,1014.81 597.20,1013.99 596.63,1013.22 595.96,1012.54 595.20,1011.94" fill="none" stroke="#a8a8a8" stroke-width="1.5" stroke-linecap="round"/><path d="M 720,1016.25 L 725.5,1021.25 L 731,1016.25" stroke="#d0d0d0" stroke-width="1.6" fill="none"/><path d="M 13,1043.2 L 21.5,1037.5 V 1048.9 Z M 66,1043.2 L 57.5,1037.5 V 1048.9 Z" fill="#b8b8b8"/><path d="M 39.5,1037.2 L 45.5,1043.2 L 39.5,1049.2 L 33.5,1043.2 Z" fill="#474747" stroke="#b8b8b8" stroke-width="1.5"/><circle cx="184" cy="1045.0" r="7" fill="none" stroke="#3b9eea" stroke-width="1.8"/><path d="M 181,1036.0 H 187 M 184,1036.0 V 1038.2 M 176.5,1038.7 L 178.5,1040.4 M 184,1045.0 L 188.5,1040.7" stroke="#3b9eea" stroke-width="1.8"/><path d="M 201.7,1035.7 V 1050.7 H 217.7 M 202.7,1039.7 L 206.7,1046.7 L 210.7,1041.7 L 215.7,1044.7" stroke="#b8b8b8" stroke-width="1.3" fill="none"/><polyline points="608.82,1043.27 608.79,1043.49 608.78,1043.72 608.81,1043.96 608.88,1044.21 608.99,1044.45 609.13,1044.68 609.31,1044.89 609.52,1045.09 609.77,1045.26 610.04,1045.39 610.35,1045.49 610.67,1045.55 611.00,1045.57 611.35,1045.54 611.70,1045.46 612.04,1045.33 612.36,1045.15 612.67,1044.92 612.95,1044.64 613.20,1044.33 613.41,1043.97 613.57,1043.58 613.68,1043.16 613.73,1042.72 613.72,1042.27 613.66,1041.82 613.52,1041.37 613.33,1040.93 613.07,1040.51 612.76,1040.13 612.39,1039.78 611.96,1039.48 611.50,1039.24 610.99,1039.06 610.46,1038.94 609.91,1038.89 609.34,1038.92 608.78,1039.03 608.22,1039.21 607.69,1039.47 607.19,1039.80 606.72,1040.21 606.31,1040.68 605.96,1041.20 605.68,1041.78 605.48,1042.40 605.36,1043.05 605.32,1043.72 605.37,1044.39 605.52,1045.07 605.75,1045.73 606.08,1046.36 606.49,1046.95 606.98,1047.48 607.54,1047.96 608.18,1048.36 608.86,1048.67 609.60,1048.90 610.36,1049.03 611.15,1049.06 611.94,1048.98 612.72,1048.79 613.48,1048.51 614.21,1048.11 614.88,1047.62 615.49,1047.04 616.03,1046.38 616.48,1045.64 616.83,1044.85 617.08,1044.00 617.21,1043.12 617.23,1042.22 617.12,1041.31 616.90,1040.42 616.56,1039.56 616.10,1038.74 615.53,1037.97 614.86,1037.29 614.10,1036.69" fill="none" stroke="#a8a8a8" stroke-width="1.5" stroke-linecap="round"/><path d="M 778.6,1034.3 L 788.0,1043.7 L 778.6,1053.1000000000001 L 769.2,1043.7 Z" fill="#142638" stroke="#2f8fe8" stroke-width="2.3"/><path d="M 778.6,1037.4 L 784.9,1043.7 L 778.6,1050.0 Z" fill="#8a8a8a"/><path d="M 778.6,1037.4 L 772.3000000000001,1043.7 L 778.6,1050.0 Z" fill="#c4c4c4"/><path d="M 1283.7,1034.3 L 1293.1000000000001,1043.7 L 1283.7,1053.1000000000001 L 1274.3,1043.7 Z" fill="#142638" stroke="#2f8fe8" stroke-width="2.3"/><path d="M 1283.7,1037.4 L 1290.0,1043.7 L 1283.7,1050.0 Z" fill="#8a8a8a"/><path d="M 1283.7,1037.4 L 1277.4,1043.7 L 1283.7,1050.0 Z" fill="#c4c4c4"/><path d="M 10.5,1067.15 Q 18,1058.15 25.5,1067.15 Q 18,1076.15 10.5,1067.15 Z" fill="#b8b8b8"/><circle cx="18" cy="1067.15" r="3.3" fill="#2a2a2a"/><circle cx="18.3" cy="1066.8500000000001" r="1.8" fill="#555"/><circle cx="19" cy="1066.15" r="0.8" fill="#ccc"/><path d="M 109,1066.15 L 114,1071.65 L 119,1066.15" stroke="#c0c0c0" stroke-width="1.5" fill="none"/><path d="M 199.1,1059.15 H 208.6 L 213.6,1064.15 V 1076.65 H 199.1 Z" fill="#f2f2f2"/><path d="M 208.6,1059.15 V 1064.15 H 213.6" fill="#d8d8d8"/><rect x="202.9" y="1064.15" width="7.5" height="4.5" rx="1.5" fill="#8fb4e8"/><rect x="202.9" y="1068.15" width="7.5" height="3" fill="#3a4a8a"/><rect x="202.9" y="1071.15" width="7.5" height="1.5" fill="#b8c8d0"/><path d="M 389.2,1067.65 C 389.2,1058.65 401.2,1058.65 401.2,1067.65 Z" fill="#b8b8b8"/><circle cx="392.9" cy="1064.15" r="1.4" fill="#333"/><circle cx="397.5" cy="1064.15" r="1.4" fill="#333"/><rect x="393.59999999999997" y="1066.65" width="3.2" height="6.5" rx="1.5" fill="#b8b8b8"/><path d="M 386.2,1070.15 H 392.2 M 398.2,1070.15 H 404.2 M 387.2,1067.65 H 403.2" stroke="#b8b8b8" stroke-width="1.3"/><line x1="430.7" y1="1074.15" x2="445.4" y2="1060.15" stroke="#b8b8b8" stroke-width="1.7"/><polyline points="589.92,1067.42 589.89,1067.64 589.88,1067.87 589.91,1068.11 589.98,1068.36 590.09,1068.60 590.23,1068.83 590.41,1069.04 590.62,1069.24 590.87,1069.41 591.14,1069.54 591.45,1069.64 591.77,1069.70 592.10,1069.72 592.45,1069.69 592.80,1069.61 593.14,1069.48 593.46,1069.30 593.77,1069.07 594.05,1068.79 594.30,1068.48 594.51,1068.12 594.67,1067.73 594.78,1067.31 594.83,1066.87 594.82,1066.42 594.76,1065.97 594.62,1065.52 594.43,1065.08 594.17,1064.66 593.86,1064.28 593.49,1063.93 593.06,1063.63 592.60,1063.39 592.09,1063.21 591.56,1063.09 591.01,1063.04 590.44,1063.07 589.88,1063.18 589.32,1063.36 588.79,1063.62 588.29,1063.95 587.82,1064.36 587.41,1064.83 587.06,1065.35 586.78,1065.93 586.58,1066.55 586.46,1067.20 586.42,1067.87 586.47,1068.54 586.62,1069.22 586.85,1069.88 587.18,1070.51 587.59,1071.10 588.08,1071.63 588.64,1072.11 589.28,1072.51 589.96,1072.82 590.70,1073.05 591.46,1073.18 592.25,1073.21 593.04,1073.13 593.82,1072.94 594.58,1072.66 595.31,1072.26 595.98,1071.77 596.59,1071.19 597.13,1070.53 597.58,1069.79 597.93,1069.00 598.18,1068.15 598.31,1067.27 598.33,1066.37 598.22,1065.46 598.00,1064.57 597.66,1063.71 597.20,1062.89 596.63,1062.12 595.96,1061.44 595.20,1060.84" fill="none" stroke="#a8a8a8" stroke-width="1.5" stroke-linecap="round"/><path d="M 720,1065.15 L 725.5,1070.15 L 731,1065.15" stroke="#d0d0d0" stroke-width="1.6" fill="none"/><path d="M 13,1092.1 L 21.5,1086.3999999999999 V 1097.8 Z M 66,1092.1 L 57.5,1086.3999999999999 V 1097.8 Z" fill="#b8b8b8"/><path d="M 39.5,1086.1 L 45.5,1092.1 L 39.5,1098.1 L 33.5,1092.1 Z" fill="#474747" stroke="#b8b8b8" stroke-width="1.5"/><circle cx="184" cy="1093.8999999999999" r="7" fill="none" stroke="#3b9eea" stroke-width="1.8"/><path d="M 181,1084.8999999999999 H 187 M 184,1084.8999999999999 V 1087.1 M 176.5,1087.6 L 178.5,1089.3 M 184,1093.8999999999999 L 188.5,1089.6" stroke="#3b9eea" stroke-width="1.8"/><path d="M 201.7,1084.6 V 1099.6 H 217.7 M 202.7,1088.6 L 206.7,1095.6 L 210.7,1090.6 L 215.7,1093.6" stroke="#b8b8b8" stroke-width="1.3" fill="none"/><polyline points="608.82,1092.17 608.79,1092.39 608.78,1092.62 608.81,1092.86 608.88,1093.11 608.99,1093.35 609.13,1093.58 609.31,1093.79 609.52,1093.99 609.77,1094.16 610.04,1094.29 610.35,1094.39 610.67,1094.45 611.00,1094.47 611.35,1094.44 611.70,1094.36 612.04,1094.23 612.36,1094.05 612.67,1093.82 612.95,1093.54 613.20,1093.23 613.41,1092.87 613.57,1092.48 613.68,1092.06 613.73,1091.62 613.72,1091.17 613.66,1090.72 613.52,1090.27 613.33,1089.83 613.07,1089.41 612.76,1089.03 612.39,1088.68 611.96,1088.38 611.50,1088.14 610.99,1087.96 610.46,1087.84 609.91,1087.79 609.34,1087.82 608.78,1087.93 608.22,1088.11 607.69,1088.37 607.19,1088.70 606.72,1089.11 606.31,1089.58 605.96,1090.10 605.68,1090.68 605.48,1091.30 605.36,1091.95 605.32,1092.62 605.37,1093.29 605.52,1093.97 605.75,1094.63 606.08,1095.26 606.49,1095.85 606.98,1096.38 607.54,1096.86 608.18,1097.26 608.86,1097.57 609.60,1097.80 610.36,1097.93 611.15,1097.96 611.94,1097.88 612.72,1097.69 613.48,1097.41 614.21,1097.01 614.88,1096.52 615.49,1095.94 616.03,1095.28 616.48,1094.54 616.83,1093.75 617.08,1092.90 617.21,1092.02 617.23,1091.12 617.12,1090.21 616.90,1089.32 616.56,1088.46 616.10,1087.64 615.53,1086.87 614.86,1086.19 614.10,1085.59" fill="none" stroke="#a8a8a8" stroke-width="1.5" stroke-linecap="round"/><path d="M 778.6,1083.1999999999998 L 788.0,1092.6 L 778.6,1102.0 L 769.2,1092.6 Z" fill="#142638" stroke="#2f8fe8" stroke-width="2.3"/><path d="M 778.6,1086.3 L 784.9,1092.6 L 778.6,1098.8999999999999 Z" fill="#8a8a8a"/><path d="M 778.6,1086.3 L 772.3000000000001,1092.6 L 778.6,1098.8999999999999 Z" fill="#c4c4c4"/><path d="M 1283.7,1083.1999999999998 L 1293.1000000000001,1092.6 L 1283.7,1102.0 L 1274.3,1092.6 Z" fill="#142638" stroke="#2f8fe8" stroke-width="2.3"/><path d="M 1283.7,1086.3 L 1290.0,1092.6 L 1283.7,1098.8999999999999 Z" fill="#8a8a8a"/><path d="M 1283.7,1086.3 L 1277.4,1092.6 L 1283.7,1098.8999999999999 Z" fill="#c4c4c4"/><path d="M 10.5,1116.05 Q 18,1107.05 25.5,1116.05 Q 18,1125.05 10.5,1116.05 Z" fill="#b8b8b8"/><circle cx="18" cy="1116.05" r="3.3" fill="#2a2a2a"/><circle cx="18.3" cy="1115.75" r="1.8" fill="#555"/><circle cx="19" cy="1115.05" r="0.8" fill="#ccc"/><path d="M 109,1115.05 L 114,1120.55 L 119,1115.05" stroke="#c0c0c0" stroke-width="1.5" fill="none"/><path d="M 199.1,1108.05 H 208.6 L 213.6,1113.05 V 1125.55 H 199.1 Z" fill="#f2f2f2"/><path d="M 208.6,1108.05 V 1113.05 H 213.6" fill="#d8d8d8"/><rect x="202.9" y="1113.05" width="7.5" height="4.5" rx="1.5" fill="#8fb4e8"/><rect x="202.9" y="1117.05" width="7.5" height="3" fill="#3a4a8a"/><rect x="202.9" y="1120.05" width="7.5" height="1.5" fill="#b8c8d0"/><path d="M 389.2,1116.55 C 389.2,1107.55 401.2,1107.55 401.2,1116.55 Z" fill="#b8b8b8"/><circle cx="392.9" cy="1113.05" r="1.4" fill="#333"/><circle cx="397.5" cy="1113.05" r="1.4" fill="#333"/><rect x="393.59999999999997" y="1115.55" width="3.2" height="6.5" rx="1.5" fill="#b8b8b8"/><path d="M 386.2,1119.05 H 392.2 M 398.2,1119.05 H 404.2 M 387.2,1116.55 H 403.2" stroke="#b8b8b8" stroke-width="1.3"/><line x1="430.7" y1="1123.05" x2="445.4" y2="1109.05" stroke="#b8b8b8" stroke-width="1.7"/><polyline points="589.92,1116.32 589.89,1116.54 589.88,1116.77 589.91,1117.01 589.98,1117.26 590.09,1117.50 590.23,1117.73 590.41,1117.94 590.62,1118.14 590.87,1118.31 591.14,1118.44 591.45,1118.54 591.77,1118.60 592.10,1118.62 592.45,1118.59 592.80,1118.51 593.14,1118.38 593.46,1118.20 593.77,1117.97 594.05,1117.69 594.30,1117.38 594.51,1117.02 594.67,1116.63 594.78,1116.21 594.83,1115.77 594.82,1115.32 594.76,1114.87 594.62,1114.42 594.43,1113.98 594.17,1113.56 593.86,1113.18 593.49,1112.83 593.06,1112.53 592.60,1112.29 592.09,1112.11 591.56,1111.99 591.01,1111.94 590.44,1111.97 589.88,1112.08 589.32,1112.26 588.79,1112.52 588.29,1112.85 587.82,1113.26 587.41,1113.73 587.06,1114.25 586.78,1114.83 586.58,1115.45 586.46,1116.10 586.42,1116.77 586.47,1117.44 586.62,1118.12 586.85,1118.78 587.18,1119.41 587.59,1120.00 588.08,1120.53 588.64,1121.01 589.28,1121.41 589.96,1121.72 590.70,1121.95 591.46,1122.08 592.25,1122.11 593.04,1122.03 593.82,1121.84 594.58,1121.56 595.31,1121.16 595.98,1120.67 596.59,1120.09 597.13,1119.43 597.58,1118.69 597.93,1117.90 598.18,1117.05 598.31,1116.17 598.33,1115.27 598.22,1114.36 598.00,1113.47 597.66,1112.61 597.20,1111.79 596.63,1111.02 595.96,1110.34 595.20,1109.74" fill="none" stroke="#a8a8a8" stroke-width="1.5" stroke-linecap="round"/><path d="M 720,1114.05 L 725.5,1119.05 L 731,1114.05" stroke="#d0d0d0" stroke-width="1.6" fill="none"/><path d="M 13,1141.0 L 21.5,1135.3 V 1146.7 Z M 66,1141.0 L 57.5,1135.3 V 1146.7 Z" fill="#b8b8b8"/><path d="M 39.5,1135.0 L 45.5,1141.0 L 39.5,1147.0 L 33.5,1141.0 Z" fill="#474747" stroke="#b8b8b8" stroke-width="1.5"/><circle cx="184" cy="1142.8" r="7" fill="none" stroke="#3b9eea" stroke-width="1.8"/><path d="M 181,1133.8 H 187 M 184,1133.8 V 1136.0 M 176.5,1136.5 L 178.5,1138.2 M 184,1142.8 L 188.5,1138.5" stroke="#3b9eea" stroke-width="1.8"/><path d="M 201.7,1133.5 V 1148.5 H 217.7 M 202.7,1137.5 L 206.7,1144.5 L 210.7,1139.5 L 215.7,1142.5" stroke="#b8b8b8" stroke-width="1.3" fill="none"/><polyline points="608.82,1141.07 608.79,1141.29 608.78,1141.52 608.81,1141.76 608.88,1142.01 608.99,1142.25 609.13,1142.48 609.31,1142.69 609.52,1142.89 609.77,1143.06 610.04,1143.19 610.35,1143.29 610.67,1143.35 611.00,1143.37 611.35,1143.34 611.70,1143.26 612.04,1143.13 612.36,1142.95 612.67,1142.72 612.95,1142.44 613.20,1142.13 613.41,1141.77 613.57,1141.38 613.68,1140.96 613.73,1140.52 613.72,1140.07 613.66,1139.62 613.52,1139.17 613.33,1138.73 613.07,1138.31 612.76,1137.93 612.39,1137.58 611.96,1137.28 611.50,1137.04 610.99,1136.86 610.46,1136.74 609.91,1136.69 609.34,1136.72 608.78,1136.83 608.22,1137.01 607.69,1137.27 607.19,1137.60 606.72,1138.01 606.31,1138.48 605.96,1139.00 605.68,1139.58 605.48,1140.20 605.36,1140.85 605.32,1141.52 605.37,1142.19 605.52,1142.87 605.75,1143.53 606.08,1144.16 606.49,1144.75 606.98,1145.28 607.54,1145.76 608.18,1146.16 608.86,1146.47 609.60,1146.70 610.36,1146.83 611.15,1146.86 611.94,1146.78 612.72,1146.59 613.48,1146.31 614.21,1145.91 614.88,1145.42 615.49,1144.84 616.03,1144.18 616.48,1143.44 616.83,1142.65 617.08,1141.80 617.21,1140.92 617.23,1140.02 617.12,1139.11 616.90,1138.22 616.56,1137.36 616.10,1136.54 615.53,1135.77 614.86,1135.09 614.10,1134.49" fill="none" stroke="#a8a8a8" stroke-width="1.5" stroke-linecap="round"/><path d="M 778.6,1132.1 L 788.0,1141.5 L 778.6,1150.9 L 769.2,1141.5 Z" fill="#142638" stroke="#2f8fe8" stroke-width="2.3"/><path d="M 778.6,1135.2 L 784.9,1141.5 L 778.6,1147.8 Z" fill="#8a8a8a"/><path d="M 778.6,1135.2 L 772.3000000000001,1141.5 L 778.6,1147.8 Z" fill="#c4c4c4"/><path d="M 1283.7,1132.1 L 1293.1000000000001,1141.5 L 1283.7,1150.9 L 1274.3,1141.5 Z" fill="#142638" stroke="#2f8fe8" stroke-width="2.3"/><path d="M 1283.7,1135.2 L 1290.0,1141.5 L 1283.7,1147.8 Z" fill="#8a8a8a"/><path d="M 1283.7,1135.2 L 1277.4,1141.5 L 1283.7,1147.8 Z" fill="#c4c4c4"/><path d="M 10.5,1164.95 Q 18,1155.95 25.5,1164.95 Q 18,1173.95 10.5,1164.95 Z" fill="#b8b8b8"/><circle cx="18" cy="1164.95" r="3.3" fill="#2a2a2a"/><circle cx="18.3" cy="1164.65" r="1.8" fill="#555"/><circle cx="19" cy="1163.95" r="0.8" fill="#ccc"/><path d="M 109,1163.95 L 114,1169.45 L 119,1163.95" stroke="#c0c0c0" stroke-width="1.5" fill="none"/><path d="M 199.1,1156.95 H 208.6 L 213.6,1161.95 V 1174.45 H 199.1 Z" fill="#f2f2f2"/><path d="M 208.6,1156.95 V 1161.95 H 213.6" fill="#d8d8d8"/><rect x="202.9" y="1161.95" width="7.5" height="4.5" rx="1.5" fill="#8fb4e8"/><rect x="202.9" y="1165.95" width="7.5" height="3" fill="#3a4a8a"/><rect x="202.9" y="1168.95" width="7.5" height="1.5" fill="#b8c8d0"/><path d="M 389.2,1165.45 C 389.2,1156.45 401.2,1156.45 401.2,1165.45 Z" fill="#b8b8b8"/><circle cx="392.9" cy="1161.95" r="1.4" fill="#333"/><circle cx="397.5" cy="1161.95" r="1.4" fill="#333"/><rect x="393.59999999999997" y="1164.45" width="3.2" height="6.5" rx="1.5" fill="#b8b8b8"/><path d="M 386.2,1167.95 H 392.2 M 398.2,1167.95 H 404.2 M 387.2,1165.45 H 403.2" stroke="#b8b8b8" stroke-width="1.3"/><line x1="430.7" y1="1171.95" x2="445.4" y2="1157.95" stroke="#b8b8b8" stroke-width="1.7"/><polyline points="589.92,1165.22 589.89,1165.44 589.88,1165.67 589.91,1165.91 589.98,1166.16 590.09,1166.40 590.23,1166.63 590.41,1166.84 590.62,1167.04 590.87,1167.21 591.14,1167.34 591.45,1167.44 591.77,1167.50 592.10,1167.52 592.45,1167.49 592.80,1167.41 593.14,1167.28 593.46,1167.10 593.77,1166.87 594.05,1166.59 594.30,1166.28 594.51,1165.92 594.67,1165.53 594.78,1165.11 594.83,1164.67 594.82,1164.22 594.76,1163.77 594.62,1163.32 594.43,1162.88 594.17,1162.46 593.86,1162.08 593.49,1161.73 593.06,1161.43 592.60,1161.19 592.09,1161.01 591.56,1160.89 591.01,1160.84 590.44,1160.87 589.88,1160.98 589.32,1161.16 588.79,1161.42 588.29,1161.75 587.82,1162.16 587.41,1162.63 587.06,1163.15 586.78,1163.73 586.58,1164.35 586.46,1165.00 586.42,1165.67 586.47,1166.34 586.62,1167.02 586.85,1167.68 587.18,1168.31 587.59,1168.90 588.08,1169.43 588.64,1169.91 589.28,1170.31 589.96,1170.62 590.70,1170.85 591.46,1170.98 592.25,1171.01 593.04,1170.93 593.82,1170.74 594.58,1170.46 595.31,1170.06 595.98,1169.57 596.59,1168.99 597.13,1168.33 597.58,1167.59 597.93,1166.80 598.18,1165.95 598.31,1165.07 598.33,1164.17 598.22,1163.26 598.00,1162.37 597.66,1161.51 597.20,1160.69 596.63,1159.92 595.96,1159.24 595.20,1158.64" fill="none" stroke="#a8a8a8" stroke-width="1.5" stroke-linecap="round"/><path d="M 720,1162.95 L 725.5,1167.95 L 731,1162.95" stroke="#d0d0d0" stroke-width="1.6" fill="none"/><path d="M 13,1189.9 L 21.5,1184.2 V 1195.6000000000001 Z M 66,1189.9 L 57.5,1184.2 V 1195.6000000000001 Z" fill="#b8b8b8"/><path d="M 39.5,1183.9 L 45.5,1189.9 L 39.5,1195.9 L 33.5,1189.9 Z" fill="#474747" stroke="#b8b8b8" stroke-width="1.5"/><circle cx="184" cy="1191.7" r="7" fill="none" stroke="#3b9eea" stroke-width="1.8"/><path d="M 181,1182.7 H 187 M 184,1182.7 V 1184.9 M 176.5,1185.4 L 178.5,1187.1000000000001 M 184,1191.7 L 188.5,1187.4" stroke="#3b9eea" stroke-width="1.8"/><path d="M 201.7,1182.4 V 1197.4 H 217.7 M 202.7,1186.4 L 206.7,1193.4 L 210.7,1188.4 L 215.7,1191.4" stroke="#b8b8b8" stroke-width="1.3" fill="none"/><polyline points="608.82,1189.97 608.79,1190.19 608.78,1190.42 608.81,1190.66 608.88,1190.91 608.99,1191.15 609.13,1191.38 609.31,1191.59 609.52,1191.79 609.77,1191.96 610.04,1192.09 610.35,1192.19 610.67,1192.25 611.00,1192.27 611.35,1192.24 611.70,1192.16 612.04,1192.03 612.36,1191.85 612.67,1191.62 612.95,1191.34 613.20,1191.03 613.41,1190.67 613.57,1190.28 613.68,1189.86 613.73,1189.42 613.72,1188.97 613.66,1188.52 613.52,1188.07 613.33,1187.63 613.07,1187.21 612.76,1186.83 612.39,1186.48 611.96,1186.18 611.50,1185.94 610.99,1185.76 610.46,1185.64 609.91,1185.59 609.34,1185.62 608.78,1185.73 608.22,1185.91 607.69,1186.17 607.19,1186.50 606.72,1186.91 606.31,1187.38 605.96,1187.90 605.68,1188.48 605.48,1189.10 605.36,1189.75 605.32,1190.42 605.37,1191.09 605.52,1191.77 605.75,1192.43 606.08,1193.06 606.49,1193.65 606.98,1194.18 607.54,1194.66 608.18,1195.06 608.86,1195.37 609.60,1195.60 610.36,1195.73 611.15,1195.76 611.94,1195.68 612.72,1195.49 613.48,1195.21 614.21,1194.81 614.88,1194.32 615.49,1193.74 616.03,1193.08 616.48,1192.34 616.83,1191.55 617.08,1190.70 617.21,1189.82 617.23,1188.92 617.12,1188.01 616.90,1187.12 616.56,1186.26 616.10,1185.44 615.53,1184.67 614.86,1183.99 614.10,1183.39" fill="none" stroke="#a8a8a8" stroke-width="1.5" stroke-linecap="round"/><path d="M 778.6,1181.0 L 788.0,1190.4 L 778.6,1199.8000000000002 L 769.2,1190.4 Z" fill="#142638" stroke="#2f8fe8" stroke-width="2.3"/><path d="M 778.6,1184.1000000000001 L 784.9,1190.4 L 778.6,1196.7 Z" fill="#8a8a8a"/><path d="M 778.6,1184.1000000000001 L 772.3000000000001,1190.4 L 778.6,1196.7 Z" fill="#c4c4c4"/><path d="M 1283.7,1181.0 L 1293.1000000000001,1190.4 L 1283.7,1199.8000000000002 L 1274.3,1190.4 Z" fill="#142638" stroke="#2f8fe8" stroke-width="2.3"/><path d="M 1283.7,1184.1000000000001 L 1290.0,1190.4 L 1283.7,1196.7 Z" fill="#8a8a8a"/><path d="M 1283.7,1184.1000000000001 L 1277.4,1190.4 L 1283.7,1196.7 Z" fill="#c4c4c4"/><path d="M 1123.4,835.4 H 1139.4 V 845 L 1131.4,854.2 L 1123.4,845 Z" fill="#3590e8"/><path d="M 1128.5,846 H 1134 M 1131.2,846 V 852" stroke="#1a3a60" stroke-width="1"/><rect x="1130.5" y="814" width="2" height="13" fill="#3d8fe0"/><path d="M 1139.4,921.6 L 1177,914.2 V 919.4 H 1263 A 2.3,2.3 0 0 1 1263,924 H 1177 V 929 Z" fill="#00ee00"/><path d="M 1977,860 H 1993 V 872 L 1985,880 L 1977,872 Z" fill="#a8a8a8"/><path d="M 1975,899 L 1983,889 V 899 Z" fill="none" stroke="#b8b8b8" stroke-width="1.3"/><rect x="1984" y="892" width="10" height="10" fill="#b8b8b8"/><circle cx="1982" cy="901" r="3.5" fill="#262626" stroke="#b8b8b8" stroke-width="1.4"/><rect x="13.5" y="1207" width="10" height="9" fill="none" stroke="#3b9eea" stroke-width="1.4"/><rect x="17" y="1210.5" width="11" height="10" fill="#222" stroke="#3b9eea" stroke-width="1.4"/><rect x="21" y="1214.5" width="3" height="3" fill="#3b9eea"/><circle cx="45" cy="1210.5" r="4.5" fill="none" stroke="#b8b8b8" stroke-width="1.4"/><rect x="45.5" y="1211" width="10" height="9" fill="#222" stroke="#b8b8b8" stroke-width="1.4"/><path d="M 70,1205 Q 67.5,1205 67.5,1208 V 1210 L 65.5,1212 L 67.5,1214 V 1217 Q 67.5,1220 70,1220 M 80,1205 Q 82.5,1205 82.5,1208 V 1210 L 84.5,1212 L 82.5,1214 V 1217 Q 82.5,1220 80,1220" stroke="#b8b8b8" stroke-width="1.6" fill="none"/><rect x="73.5" y="1205" width="3" height="15" fill="#555"/><path d="M 94,1219 H 106 C 107,1214 106,1208 100.5,1207.5 C 96,1207.5 93.5,1212 94,1219 Z" fill="#b8b8b8"/><path d="M 106,1214 L 110,1207 M 107.5,1215 L 112,1209" stroke="#b8b8b8" stroke-width="1.3"/><path d="M 776,1215.5 L 782,1211.5 L 788,1215.5 Z" fill="#b8b8b8"/><line x1="812" y1="1212" x2="874" y2="1212" stroke="#555" stroke-width="1.5"/><circle cx="812" cy="1213.5" r="5" fill="#262626" stroke="#9a9a9a" stroke-width="2.2"/><path d="M 890,1217 L 895,1210 L 897,1213 M 892,1217 L 902,1206 L 914,1217 Z" fill="#b8b8b8" stroke="#b8b8b8" stroke-width="0.8"/></svg>
</body></html>
